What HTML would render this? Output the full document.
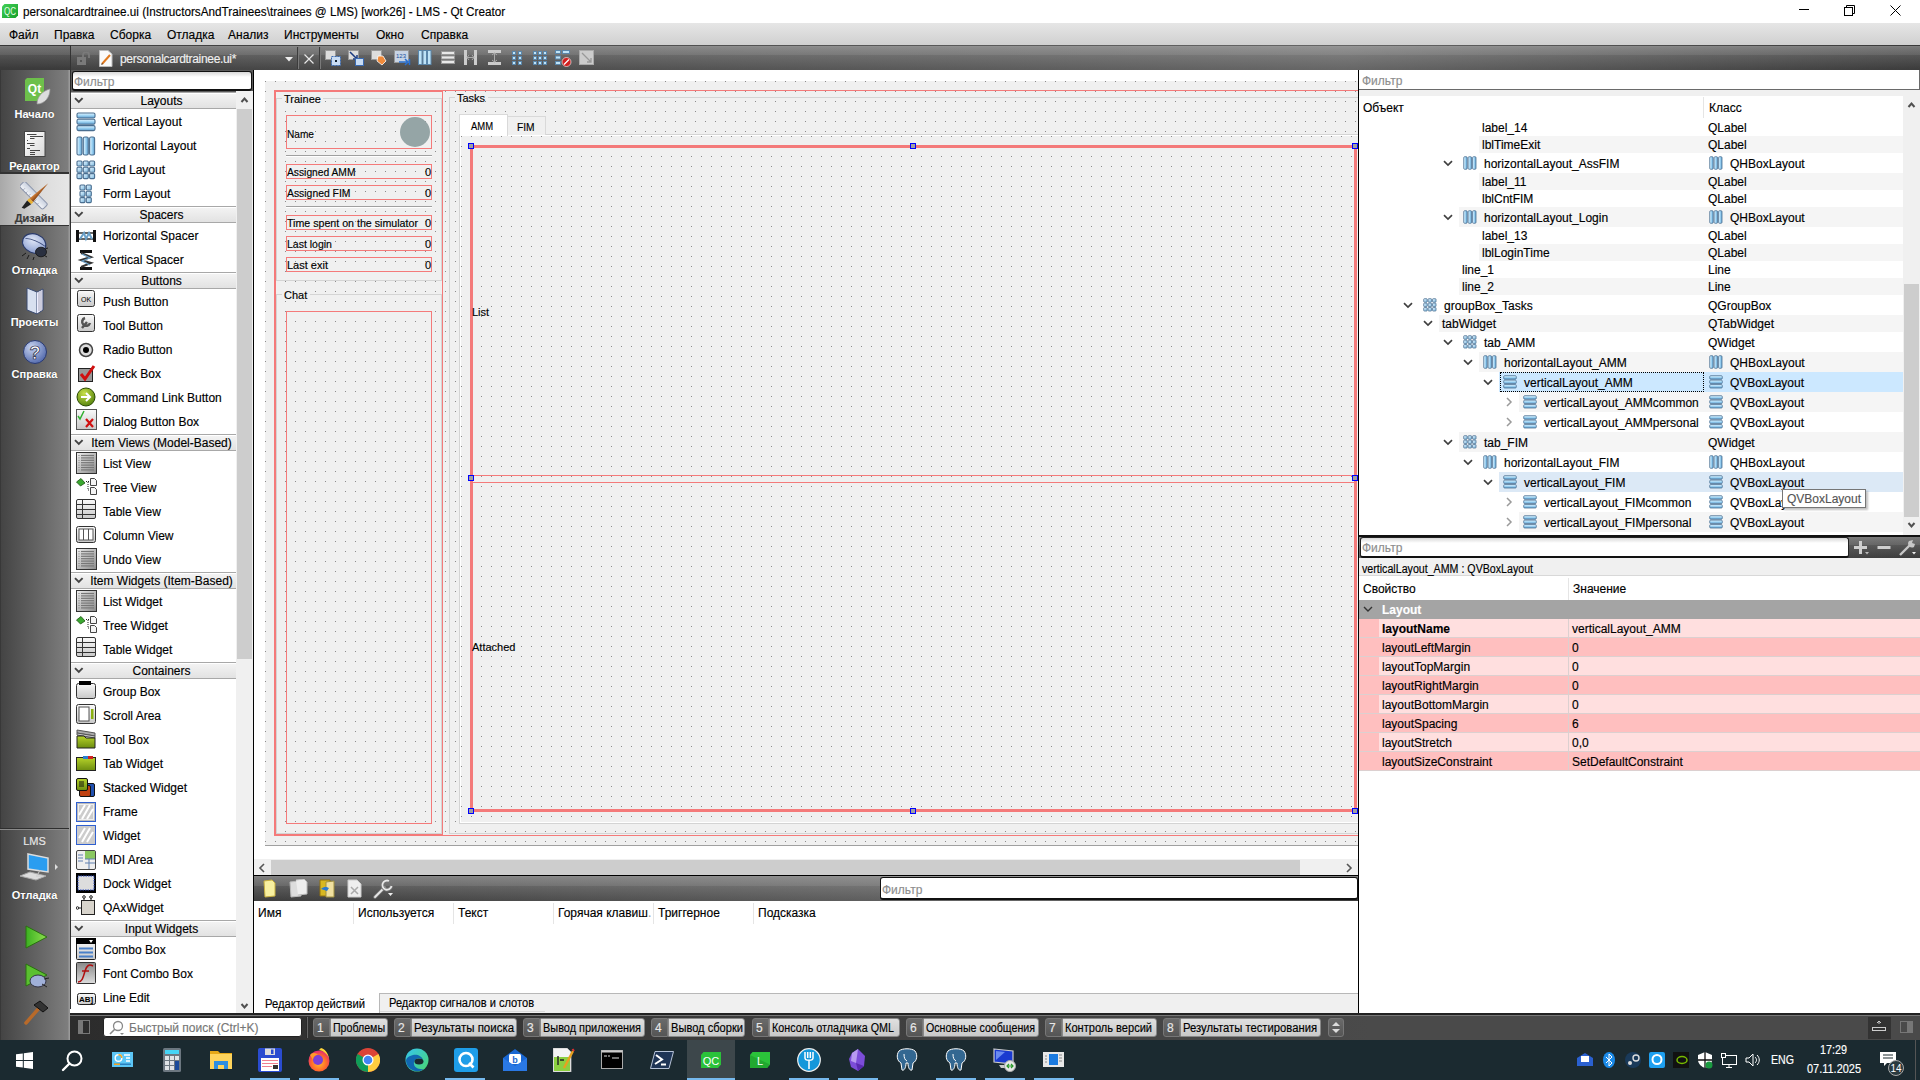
<!DOCTYPE html><html><head><meta charset="utf-8"><style>
*{margin:0;padding:0;box-sizing:border-box}
html,body{width:1920px;height:1080px;overflow:hidden;background:#fff;font-family:"Liberation Sans",sans-serif;font-size:12px;color:#000}
.a{position:absolute}
.t{position:absolute;white-space:pre;line-height:14px;-webkit-text-stroke:0.15px currentColor}
.hd{position:absolute;left:71px;width:165px;height:17px;background:linear-gradient(#f4f4f4,#e2e2e2);border-top:1px solid #a8a8a8;border-bottom:1px solid #a8a8a8;box-shadow:inset 0 1px 0 #fff}
</style></head><body>
<div class="a" style="left:0px;top:0px;width:1920px;height:23px;background:#fff"></div>
<svg class="a" style="left:2px;top:4px;" width="16" height="14" viewBox="0 0 16 14"><defs><linearGradient id="qcg" x1="0" y1="0" x2="1" y2="1"><stop offset="0" stop-color="#44d058"/><stop offset="1" stop-color="#14a02a"/></linearGradient></defs><path d="M2.5 0 H16 V11.5 L13.5 14 H0 V2.5Z" fill="url(#qcg)"/><text x="8" y="11" font-size="10" font-family="Liberation Sans" text-anchor="middle" fill="#e8ffe8" textLength="12" lengthAdjust="spacingAndGlyphs">QC</text></svg>
<div class="t" style="left:23px;top:5px;font-size:12px;transform:scaleX(0.9760);transform-origin:0 0;">personalcardtrainee.ui (InstructorsAndTrainees\trainees @ LMS) [work26] - LMS - Qt Creator</div>
<svg class="a" style="left:1799px;top:9px;" width="10" height="2" viewBox="0 0 10 2"><rect width="10" height="1" fill="#000"/></svg>
<svg class="a" style="left:1844px;top:5px;" width="11" height="11" viewBox="0 0 11 11"><rect x="0.5" y="2.5" width="8" height="8" fill="none" stroke="#000"/><path d="M2.5 2.5 V0.5 H10.5 V8.5 H8.5" fill="none" stroke="#000"/></svg>
<svg class="a" style="left:1890px;top:5px;" width="11" height="11" viewBox="0 0 11 11"><path d="M0.5 0.5 L10.5 10.5 M10.5 0.5 L0.5 10.5" stroke="#000"/></svg>
<div class="a" style="left:0px;top:23px;width:1920px;height:22px;background:linear-gradient(#e6e6e6,#d0d0d0)"></div>
<div class="t" style="left:9px;top:28px;">Файл</div>
<div class="t" style="left:54px;top:28px;">Правка</div>
<div class="t" style="left:110px;top:28px;">Сборка</div>
<div class="t" style="left:167px;top:28px;">Отладка</div>
<div class="t" style="left:228px;top:28px;">Анализ</div>
<div class="t" style="left:284px;top:28px;">Инструменты</div>
<div class="t" style="left:376px;top:28px;">Окно</div>
<div class="t" style="left:421px;top:28px;">Справка</div>
<div class="a" style="left:0px;top:45px;width:1920px;height:25px;background:linear-gradient(90deg,rgba(0,0,0,.118) 0%,rgba(153,153,153,.39) 70%,rgba(0,0,0,.157) 100%),linear-gradient(#444 0px,#444 1px,#9a9a9a 1px,#8e8e8e 2px,#767676 10px,#666 10px,#474747 24px,#474747 25px)"></div>
<div class="a" style="left:0px;top:45px;width:70px;height:25px;background:rgba(0,0,0,.08)"></div>
<div class="a" style="left:70px;top:45px;width:1px;height:25px;background:#333"></div>
<svg class="a" style="left:77px;top:52px;" width="14" height="13" viewBox="0 0 14 13"><rect x="0" y="5" width="9" height="8" fill="#7a7a7a"/><path d="M6 5 V3 A3 3 0 0 1 12 3 V6" stroke="#7a7a7a" stroke-width="1.8" fill="none"/><rect x="3" y="8" width="2" height="2" fill="#555"/></svg>
<svg class="a" style="left:99px;top:50px;" width="15" height="17" viewBox="0 0 15 17"><path d="M0.5 0.5 H9 L13 4 V16.5 H0.5Z" fill="#fafafa" stroke="#bbb"/><path d="M3 14 L11 5" stroke="#e07a20" stroke-width="2"/><path d="M2 15 L3 13 L4 14Z" fill="#333"/></svg>
<div class="t" style="left:120px;top:52px;color:#f0f0f0;letter-spacing:-0.32px">personalcardtrainee.ui*</div>
<svg class="a" style="left:285px;top:57px;" width="8" height="5" viewBox="0 0 8 5"><path d="M0 0 H8 L4 4.5Z" fill="#eee"/></svg>
<div class="a" style="left:297px;top:47px;width:1px;height:22px;background:#3c3c3c"></div>
<div class="a" style="left:298px;top:47px;width:1px;height:22px;background:#7a7a7a"></div>
<svg class="a" style="left:304px;top:54px;" width="10" height="10" viewBox="0 0 10 10"><path d="M0.5 0.5 L9.5 9.5 M9.5 0.5 L0.5 9.5" stroke="#e8e8e8" stroke-width="1.2"/></svg>
<div class="a" style="left:319px;top:47px;width:1px;height:22px;background:#3c3c3c"></div>
<div class="a" style="left:320px;top:47px;width:1px;height:22px;background:#7a7a7a"></div>
<svg class="a" style="left:325px;top:50px;" width="17" height="17" viewBox="0 0 17 17"><rect x="0.5" y="0.5" width="10" height="9" fill="#ddd" stroke="#999"/><rect x="6.5" y="6.5" width="9" height="9" fill="#c8dcf4" stroke="#3a6ab0" stroke-dasharray="2 1"/><rect x="10" y="10" width="2" height="2" fill="#123"/></svg>
<svg class="a" style="left:348px;top:50px;" width="17" height="17" viewBox="0 0 17 17"><rect x="0.5" y="0.5" width="10" height="9" fill="#ddd" stroke="#999"/><path d="M2 2 L9 9 M9 5 V9 H5" stroke="#1a3a80" stroke-width="1.5" fill="none"/><rect x="7.5" y="8.5" width="8" height="7" fill="#c8dcf4" stroke="#3a6ab0"/></svg>
<svg class="a" style="left:371px;top:50px;" width="17" height="17" viewBox="0 0 17 17"><rect x="0.5" y="0.5" width="10" height="9" fill="#ddd" stroke="#999"/><path d="M7 6 L12 6 L15 11 L11 15 L6 11Z" fill="#f08a3a" stroke="#fff" stroke-width=".8"/></svg>
<svg class="a" style="left:394px;top:50px;" width="17" height="17" viewBox="0 0 17 17"><rect x="0.5" y="0.5" width="14" height="12" fill="#c8d4e4" stroke="#999"/><text x="2" y="8" font-size="6" font-family="Liberation Sans" fill="#2050a0">123</text><path d="M5 12 H14 M11 9 L14 12 L11 15 M15.5 9 V15" stroke="#2a70d0" stroke-width="1.5" fill="none"/></svg>
<svg class="a" style="left:418px;top:50px;" width="17" height="17" viewBox="0 0 17 17"><rect x="0.5" y="0.5" width="3.5" height="14" fill="#bfe3f7" stroke="#5a86aa"/><rect x="5" y="0.5" width="3.5" height="14" fill="#bfe3f7" stroke="#5a86aa"/><rect x="9.5" y="0.5" width="3.5" height="14" fill="#bfe3f7" stroke="#5a86aa"/></svg>
<svg class="a" style="left:441px;top:50px;" width="17" height="17" viewBox="0 0 17 17"><rect x="0.5" y="1.5" width="13" height="3" fill="#e8e8e8" stroke="#999"/><rect x="0.5" y="6" width="13" height="3" fill="#e8e8e8" stroke="#999"/><rect x="0.5" y="10.5" width="13" height="3" fill="#e8e8e8" stroke="#999"/></svg>
<svg class="a" style="left:464px;top:50px;" width="17" height="17" viewBox="0 0 17 17"><rect x="0" y="0" width="3" height="15" fill="#ccc"/><rect x="10" y="0" width="3" height="15" fill="#ccc"/><path d="M3 7.5 H10 M5 5 L3 7.5 L5 10 M8 5 L10 7.5 L8 10" stroke="#aaa" fill="none"/></svg>
<svg class="a" style="left:488px;top:50px;" width="17" height="17" viewBox="0 0 17 17"><rect x="0" y="0" width="13" height="3" fill="#ccc"/><rect x="0" y="12" width="13" height="3" fill="#ccc"/><path d="M6.5 3 V12 M4 5 L6.5 3 L9 5 M4 10 L6.5 12 L9 10" stroke="#aaa" fill="none"/></svg>
<svg class="a" style="left:512px;top:50px;" width="17" height="17" viewBox="0 0 17 17"><rect x="0.5" y="1.5" width="3" height="3" fill="#bfe3f7" stroke="#5a86aa"/><rect x="6.5" y="1.5" width="3" height="3" fill="#bfe3f7" stroke="#5a86aa"/><rect x="0.5" y="6.5" width="3" height="3" fill="#bfe3f7" stroke="#5a86aa"/><rect x="6.5" y="6.5" width="3" height="3" fill="#bfe3f7" stroke="#5a86aa"/><rect x="0.5" y="11.5" width="3" height="3" fill="#bfe3f7" stroke="#5a86aa"/><rect x="6.5" y="11.5" width="3" height="3" fill="#bfe3f7" stroke="#5a86aa"/></svg>
<svg class="a" style="left:533px;top:50px;" width="17" height="17" viewBox="0 0 17 17"><rect x="0.5" y="1.5" width="3" height="3" fill="#bfe3f7" stroke="#5a86aa"/><rect x="0.5" y="6.5" width="3" height="3" fill="#bfe3f7" stroke="#5a86aa"/><rect x="0.5" y="11.5" width="3" height="3" fill="#bfe3f7" stroke="#5a86aa"/><rect x="5.5" y="1.5" width="3" height="3" fill="#bfe3f7" stroke="#5a86aa"/><rect x="5.5" y="6.5" width="3" height="3" fill="#bfe3f7" stroke="#5a86aa"/><rect x="5.5" y="11.5" width="3" height="3" fill="#bfe3f7" stroke="#5a86aa"/><rect x="10.5" y="1.5" width="3" height="3" fill="#bfe3f7" stroke="#5a86aa"/><rect x="10.5" y="6.5" width="3" height="3" fill="#bfe3f7" stroke="#5a86aa"/><rect x="10.5" y="11.5" width="3" height="3" fill="#bfe3f7" stroke="#5a86aa"/></svg>
<svg class="a" style="left:555px;top:50px;" width="17" height="17" viewBox="0 0 17 17"><rect x="0.5" y="0.5" width="5" height="3" fill="#bfe3f7" stroke="#5a86aa"/><rect x="7.5" y="0.5" width="7" height="3" fill="#bfe3f7" stroke="#5a86aa"/><rect x="0.5" y="6" width="5" height="3" fill="#bfe3f7" stroke="#5a86aa"/><rect x="0.5" y="11.5" width="5" height="3" fill="#bfe3f7" stroke="#5a86aa"/><circle cx="11.5" cy="12" r="4.5" fill="#d02020" stroke="#fff" stroke-width=".6"/><path d="M9 14.5 L14 9.5" stroke="#fff" stroke-width="1.2"/></svg>
<svg class="a" style="left:579px;top:50px;" width="17" height="17" viewBox="0 0 17 17"><rect x="0.5" y="0.5" width="14" height="14" fill="#ccc" stroke="#aaa"/><path d="M3 3 L12 12 M12 8 V12 H8" stroke="#999" stroke-width="1.3" fill="none"/></svg>
<div class="a" style="left:0px;top:70px;width:70px;height:970px;background:linear-gradient(90deg,#2c2c2c 0px,#444 1px,#7e7e7e 68px,#9a9a9a 69px)"></div>
<div class="a" style="left:70px;top:70px;width:1px;height:943px;background:#2e2e2e"></div>
<svg class="a" style="left:24px;top:77px;" width="28" height="30" viewBox="0 0 28 30"><path d="M3 1 H20 V20 L16 24 H1 V3Z" fill="#6dc04b"/><text x="10.5" y="16" font-size="12" font-weight="bold" font-family="Liberation Sans" text-anchor="middle" fill="#fff">Qt</text><path d="M13 27 C13 20 18 14 26 12 C26 20 21 27 13 27Z" fill="#ddd" stroke="#999" stroke-width=".7"/></svg>
<div class="t" style="left:0;width:69px;text-align:center;top:107px;font-size:11px;font-weight:bold;color:#fff;text-shadow:0 0 1px #000">Начало</div>
<svg class="a" style="left:24px;top:131px;" width="22" height="26" viewBox="0 0 22 26"><defs><linearGradient id="dg" x1="0" y1="0" x2="1" y2="1"><stop offset="0" stop-color="#fff"/><stop offset="1" stop-color="#d8d8d8"/></linearGradient></defs><rect x="0.5" y="0.5" width="20.5" height="25" fill="url(#dg)" stroke="#444"/><path d="M3 3.5 H12.5 M6 5.5 H19 M6 7.5 H10.5 M3 9.5 H4 M3 12.5 H10.5 M6 14.5 H10.5 M3 17.5 H6 M6 19.5 H16 M6 21.5 H11 M6 23.5 H11" stroke="#333" stroke-width="0.9"/></svg>
<div class="t" style="left:0;width:69px;text-align:center;top:159px;font-size:11px;font-weight:bold;color:#fff;text-shadow:0 0 1px #000">Редактор</div>
<div class="a" style="left:0px;top:172px;width:69px;height:2px;background:#333"></div>
<div class="a" style="left:0px;top:174px;width:69px;height:51px;background:linear-gradient(90deg,#a8a8a8,#dcdcdc 60%,#e6e6e6)"></div>
<div class="a" style="left:0px;top:225px;width:69px;height:1px;background:#333"></div>
<svg class="a" style="left:20px;top:182px;" width="30" height="28" viewBox="0 0 30 28"><defs><linearGradient id="rul" x1="0" y1="0" x2="1" y2="0"><stop offset="0" stop-color="#f4f6fa"/><stop offset="1" stop-color="#c8d0de"/></linearGradient><linearGradient id="brs" x1="0" y1="0" x2="1" y2="0"><stop offset="0" stop-color="#e08a40"/><stop offset="1" stop-color="#7a3a10"/></linearGradient></defs><g transform="translate(13.5,13.3) rotate(-45)"><rect x="-3.8" y="-16.5" width="7.6" height="33" rx="1.8" fill="url(#rul)" stroke="#8a94aa" stroke-width="1"/><path d="M-3.8 -11 H-1 M-3.8 -7 H-1.8 M-3.8 -3 H-1 M-3.8 1 H-1.8 M-3.8 5 H-1 M-3.8 9 H-1.8" stroke="#9aa2b4" stroke-width=".8"/></g><g transform="translate(15.5,14) rotate(45)"><path d="M0 -18 L2.6 6 L-2.6 6Z" fill="url(#brs)"/><rect x="-2.8" y="6" width="5.6" height="3" fill="#e8b030"/><path d="M-2.8 9 H2.8 L1.2 17 L-1.5 18Z" fill="#222"/></g></svg>
<div class="t" style="left:0;width:69px;text-align:center;top:211px;font-size:11px;font-weight:bold;color:#3a3a3a">Дизайн</div>
<svg class="a" style="left:20px;top:232px;" width="30" height="28" viewBox="0 0 30 28"><defs><radialGradient id="bg1" cx=".4" cy=".35" r=".7"><stop offset="0" stop-color="#dfe6f6"/><stop offset="1" stop-color="#8a9ed0"/></radialGradient></defs><path d="M6 21 L2 24 M9 23 L7 27 M14 25 L13 28 M22 22 L27 25 M24 17 L28 16" stroke="#1a1a1a" stroke-width="1"/><g transform="rotate(22 14 12)"><ellipse cx="14" cy="11.5" rx="12" ry="9.5" fill="url(#bg1)" stroke="#2a3a6a" stroke-width="1.1"/><path d="M4 10 Q14 7 25 10" stroke="#3a4a7a" fill="none" stroke-width=".9"/></g><ellipse cx="21" cy="20" rx="5.5" ry="4.8" fill="#2a3040" stroke="#111" stroke-width=".8"/></svg>
<div class="t" style="left:0;width:69px;text-align:center;top:263px;font-size:11px;font-weight:bold;color:#fff;text-shadow:0 0 1px #000">Отладка</div>
<svg class="a" style="left:26px;top:286px;" width="18" height="29" viewBox="0 0 18 29"><path d="M1 2 L11 6 V28 L1 24Z" fill="#d8e0f0" stroke="#3a4a70"/><path d="M11 6 L17 3 V24 L11 28" fill="#eef" stroke="#3a4a70"/><path d="M13 6 V25 M15 5 V25" stroke="#aab"/></svg>
<div class="t" style="left:0;width:69px;text-align:center;top:315px;font-size:11px;font-weight:bold;color:#fff;text-shadow:0 0 1px #000">Проекты</div>
<svg class="a" style="left:22px;top:339px;" width="26" height="26" viewBox="0 0 26 26"><defs><radialGradient id="hg" cx=".35" cy=".3" r=".8"><stop offset="0" stop-color="#c8d4f0"/><stop offset="1" stop-color="#4a62a8"/></radialGradient></defs><circle cx="13" cy="13" r="11.5" fill="url(#hg)" stroke="#2a3a70" stroke-width="1"/><text x="13" y="20" font-size="18" font-weight="bold" font-family="Liberation Sans" text-anchor="middle" fill="#fff" stroke="#1a2440" stroke-width=".7">?</text></svg>
<div class="t" style="left:0;width:69px;text-align:center;top:367px;font-size:11px;font-weight:bold;color:#fff;text-shadow:0 0 1px #000">Справка</div>
<div class="a" style="left:0px;top:828px;width:69px;height:1px;background:#2e2e2e"></div>
<div class="a" style="left:0px;top:829px;width:69px;height:1px;background:#8a8a8a"></div>
<div class="t" style="left:0;width:69px;text-align:center;top:834px;font-size:11px;color:#e8e8e8">LMS</div>
<svg class="a" style="left:18px;top:852px;" width="40" height="30" viewBox="0 0 40 30"><path d="M10 2 L30 6 V20 L10 17Z" fill="#2a9df0" stroke="#ddd" stroke-width="1.5"/><path d="M2 24 L12 20 L28 24 L18 28Z" fill="#ddd" stroke="#aaa"/><path d="M20 22 L22 18 M18 24 L26 24" stroke="#ccc"/><path d="M37 12 L40 15 L37 18Z" fill="#ddd"/></svg>
<div class="t" style="left:0;width:69px;text-align:center;top:888px;font-size:11px;font-weight:bold;color:#fff;text-shadow:0 0 1px #000">Отладка</div>
<svg class="a" style="left:24px;top:924px;" width="25" height="26" viewBox="0 0 25 26"><defs><linearGradient id="rg" x1="0" y1="0" x2="1" y2="0"><stop offset="0" stop-color="#3ab020"/><stop offset="1" stop-color="#90e050"/></linearGradient></defs><path d="M2 2 L23 13 L2 24Z" fill="url(#rg)" stroke="#2a7010"/></svg>
<svg class="a" style="left:24px;top:962px;" width="26" height="28" viewBox="0 0 26 28"><path d="M2 2 L23 13 L2 24Z" fill="#5ac030" stroke="#2a7010"/><ellipse cx="14" cy="19" rx="8" ry="6" fill="#a0b0d8" stroke="#334"/><path d="M18 22 L23 25 M20 17 L25 16" stroke="#222"/></svg>
<svg class="a" style="left:22px;top:998px;" width="30" height="28" viewBox="0 0 30 28"><path d="M4 25 L18 9" stroke="#b86a2a" stroke-width="3.5" stroke-linecap="round"/><path d="M12 7 L18 3 L26 10 L21 14Z" fill="#333" stroke="#111"/></svg>
<div class="a" style="left:71px;top:70px;width:182px;height:943px;background:#fff"></div>
<div class="a" style="left:71px;top:70px;width:182px;height:22px;background:#5a5a5a"></div>
<div class="a" style="left:72px;top:71px;width:180px;height:20px;background:linear-gradient(#d8d8d8,#fff 5px);border:1px solid #111;border-bottom:2px solid #111;border-radius:3px"></div>
<div class="t" style="left:74px;top:75px;color:#8e8e8e">Фильтр</div>
<div class="a" style="left:236px;top:91px;width:17px;height:922px;background:#f0f0f0"></div>
<div class="a" style="left:237px;top:109px;width:15px;height:550px;background:#cdcdcd"></div>
<svg class="a" style="left:240px;top:96px;" width="9" height="8" viewBox="0 0 9 8"><path d="M1.5 6 L4.5 2.5 L7.5 6" stroke="#505050" stroke-width="2" fill="none" stroke-linecap="butt"/></svg>
<svg class="a" style="left:240px;top:1002px;" width="9" height="8" viewBox="0 0 9 8"><path d="M1.5 2 L4.5 5.5 L7.5 2" stroke="#505050" stroke-width="2" fill="none" stroke-linecap="butt"/></svg>
<div class="hd" style="top:92px"></div>
<svg class="a" style="left:74px;top:97px;" width="10" height="7" viewBox="0 0 10 7"><path d="M1 1.2 L4.8 5 L8.6 1.2" stroke="#444" stroke-width="1.9" fill="none"/></svg>
<div class="t" style="left:70px;width:183px;text-align:center;top:94px;">Layouts</div>
<svg class="a" style="left:76px;top:112px;" width="21" height="22" viewBox="0 0 21 22"><defs><linearGradient id="lv" x1="0" y1="0" x2="0" y2="1"><stop offset="0" stop-color="#e8f6ff"/><stop offset=".5" stop-color="#9ed4f4"/><stop offset="1" stop-color="#5e9ccc"/></linearGradient></defs><rect x="1" y="1.0" width="18" height="5" rx="1.5" fill="url(#lv)" stroke="#4a6e90" stroke-width="1.1"/><rect x="1" y="7.3" width="18" height="5" rx="1.5" fill="url(#lv)" stroke="#4a6e90" stroke-width="1.1"/><rect x="1" y="13.6" width="18" height="5" rx="1.5" fill="url(#lv)" stroke="#4a6e90" stroke-width="1.1"/></svg>
<div class="t" style="left:103px;top:115px;">Vertical Layout</div>
<svg class="a" style="left:76px;top:136px;" width="21" height="22" viewBox="0 0 21 22"><defs><linearGradient id="lh" x1="0" y1="0" x2="1" y2="0"><stop offset="0" stop-color="#e8f6ff"/><stop offset=".5" stop-color="#9ed4f4"/><stop offset="1" stop-color="#5e9ccc"/></linearGradient></defs><rect x="1.0" y="1" width="5" height="18" rx="1.5" fill="url(#lh)" stroke="#4a6e90" stroke-width="1.1"/><rect x="7.3" y="1" width="5" height="18" rx="1.5" fill="url(#lh)" stroke="#4a6e90" stroke-width="1.1"/><rect x="13.6" y="1" width="5" height="18" rx="1.5" fill="url(#lh)" stroke="#4a6e90" stroke-width="1.1"/></svg>
<div class="t" style="left:103px;top:139px;">Horizontal Layout</div>
<svg class="a" style="left:76px;top:160px;" width="21" height="22" viewBox="0 0 21 22"><defs><linearGradient id="lg" x1="0" y1="0" x2="1" y2="1"><stop offset="0" stop-color="#e8f6ff"/><stop offset="1" stop-color="#7ab8e0"/></linearGradient></defs><rect x="1.0" y="1.0" width="5" height="5" rx="1" fill="url(#lg)" stroke="#4a6e90" stroke-width="1.1"/><rect x="1.0" y="7.3" width="5" height="5" rx="1" fill="url(#lg)" stroke="#4a6e90" stroke-width="1.1"/><rect x="1.0" y="13.6" width="5" height="5" rx="1" fill="url(#lg)" stroke="#4a6e90" stroke-width="1.1"/><rect x="7.3" y="1.0" width="5" height="5" rx="1" fill="url(#lg)" stroke="#4a6e90" stroke-width="1.1"/><rect x="7.3" y="7.3" width="5" height="5" rx="1" fill="url(#lg)" stroke="#4a6e90" stroke-width="1.1"/><rect x="7.3" y="13.6" width="5" height="5" rx="1" fill="url(#lg)" stroke="#4a6e90" stroke-width="1.1"/><rect x="13.6" y="1.0" width="5" height="5" rx="1" fill="url(#lg)" stroke="#4a6e90" stroke-width="1.1"/><rect x="13.6" y="7.3" width="5" height="5" rx="1" fill="url(#lg)" stroke="#4a6e90" stroke-width="1.1"/><rect x="13.6" y="13.6" width="5" height="5" rx="1" fill="url(#lg)" stroke="#4a6e90" stroke-width="1.1"/></svg>
<div class="t" style="left:103px;top:163px;">Grid Layout</div>
<svg class="a" style="left:76px;top:184px;" width="21" height="22" viewBox="0 0 21 22"><defs><linearGradient id="lf" x1="0" y1="0" x2="1" y2="1"><stop offset="0" stop-color="#e8f6ff"/><stop offset="1" stop-color="#7ab8e0"/></linearGradient></defs><rect x="4.0" y="1.0" width="5" height="5" rx="1" fill="url(#lf)" stroke="#4a6e90" stroke-width="1.1"/><rect x="4.0" y="7.3" width="5" height="5" rx="1" fill="url(#lf)" stroke="#4a6e90" stroke-width="1.1"/><rect x="4.0" y="13.6" width="5" height="5" rx="1" fill="url(#lf)" stroke="#4a6e90" stroke-width="1.1"/><rect x="10.3" y="1.0" width="5" height="5" rx="1" fill="url(#lf)" stroke="#4a6e90" stroke-width="1.1"/><rect x="10.3" y="7.3" width="5" height="5" rx="1" fill="url(#lf)" stroke="#4a6e90" stroke-width="1.1"/><rect x="10.3" y="13.6" width="5" height="5" rx="1" fill="url(#lf)" stroke="#4a6e90" stroke-width="1.1"/></svg>
<div class="t" style="left:103px;top:187px;">Form Layout</div>
<div class="hd" style="top:206px"></div>
<svg class="a" style="left:74px;top:211px;" width="10" height="7" viewBox="0 0 10 7"><path d="M1 1.2 L4.8 5 L8.6 1.2" stroke="#444" stroke-width="1.9" fill="none"/></svg>
<div class="t" style="left:70px;width:183px;text-align:center;top:208px;">Spacers</div>
<svg class="a" style="left:76px;top:226px;" width="21" height="22" viewBox="0 0 21 22"><rect x="0" y="4" width="3" height="12" fill="#111"/><rect x="17" y="4" width="3" height="12" fill="#111"/><path d="M3 7 L17 7 M3 13 L17 13" stroke="#333" stroke-width="1.5"/><path d="M4 13 L8 7 L10 13 L13 7 L16 13" stroke="#6aa0c8" stroke-width="2" fill="none"/></svg>
<div class="t" style="left:103px;top:229px;">Horizontal Spacer</div>
<svg class="a" style="left:76px;top:250px;" width="21" height="22" viewBox="0 0 21 22"><rect x="4" y="0" width="12" height="3" fill="#111"/><rect x="4" y="17" width="12" height="3" fill="#111"/><path d="M5 3 L15 7 L5 10 L15 13 L5 17" stroke="#333" stroke-width="2" fill="none"/><path d="M6 4 L14 8 L6 11 L14 15" stroke="#6aa0c8" stroke-width="1.2" fill="none"/></svg>
<div class="t" style="left:103px;top:253px;">Vertical Spacer</div>
<div class="hd" style="top:272px"></div>
<svg class="a" style="left:74px;top:277px;" width="10" height="7" viewBox="0 0 10 7"><path d="M1 1.2 L4.8 5 L8.6 1.2" stroke="#444" stroke-width="1.9" fill="none"/></svg>
<div class="t" style="left:70px;width:183px;text-align:center;top:274px;">Buttons</div>
<svg class="a" style="left:76px;top:289px;" width="21" height="22" viewBox="0 0 21 22"><defs><linearGradient id="gb" x1="0" y1="0" x2="0" y2="1"><stop offset="0" stop-color="#fafafa"/><stop offset="1" stop-color="#c8c8c8"/></linearGradient><linearGradient id="gg" x1="0" y1="0" x2="0" y2="1"><stop offset="0" stop-color="#b6d32a"/><stop offset="1" stop-color="#6c8c10"/></linearGradient></defs><rect x="1.5" y="1.5" width="17" height="16" rx="2" fill="url(#gb)" stroke="#333"/><text x="10" y="12.5" font-size="7" font-family="Liberation Sans" text-anchor="middle" fill="#000">OK</text></svg>
<div class="t" style="left:103px;top:295px;">Push Button</div>
<svg class="a" style="left:76px;top:313px;" width="21" height="22" viewBox="0 0 21 22"><defs><linearGradient id="gb" x1="0" y1="0" x2="0" y2="1"><stop offset="0" stop-color="#fafafa"/><stop offset="1" stop-color="#c8c8c8"/></linearGradient><linearGradient id="gg" x1="0" y1="0" x2="0" y2="1"><stop offset="0" stop-color="#b6d32a"/><stop offset="1" stop-color="#6c8c10"/></linearGradient></defs><rect x="1.5" y="1.5" width="17" height="17" rx="2" fill="url(#gb)" stroke="#333"/><path d="M6 15 L11 9 M9 5 A4 4 0 1 0 14 10" stroke="#555" stroke-width="2.5" fill="none"/></svg>
<div class="t" style="left:103px;top:319px;">Tool Button</div>
<svg class="a" style="left:76px;top:340px;" width="21" height="22" viewBox="0 0 21 22"><circle cx="10" cy="10" r="6.5" fill="#ddd" stroke="#444" stroke-width="1.5"/><circle cx="10" cy="10" r="3" fill="#000"/></svg>
<div class="t" style="left:103px;top:343px;">Radio Button</div>
<svg class="a" style="left:76px;top:364px;" width="21" height="22" viewBox="0 0 21 22"><defs><linearGradient id="gb" x1="0" y1="0" x2="0" y2="1"><stop offset="0" stop-color="#fafafa"/><stop offset="1" stop-color="#c8c8c8"/></linearGradient><linearGradient id="gg" x1="0" y1="0" x2="0" y2="1"><stop offset="0" stop-color="#b6d32a"/><stop offset="1" stop-color="#6c8c10"/></linearGradient></defs><rect x="2.5" y="4.5" width="14" height="13" fill="#999" stroke="#222"/><path d="M5 10 L9 15 L18 2" stroke="#d01010" stroke-width="3" fill="none"/></svg>
<div class="t" style="left:103px;top:367px;">Check Box</div>
<svg class="a" style="left:76px;top:387px;" width="21" height="22" viewBox="0 0 21 22"><defs><radialGradient id="cg" cx=".4" cy=".3" r=".8"><stop offset="0" stop-color="#c8e048"/><stop offset="1" stop-color="#4a7a08"/></radialGradient></defs><circle cx="10" cy="10" r="9" fill="url(#cg)" stroke="#2a4a00"/><path d="M5 10 L14 10 M10 6 L14 10 L10 14" stroke="#fff" stroke-width="2" fill="none"/></svg>
<div class="t" style="left:103px;top:391px;">Command Link Button</div>
<svg class="a" style="left:76px;top:409px;" width="21" height="22" viewBox="0 0 21 22"><defs><linearGradient id="gb" x1="0" y1="0" x2="0" y2="1"><stop offset="0" stop-color="#fafafa"/><stop offset="1" stop-color="#c8c8c8"/></linearGradient><linearGradient id="gg" x1="0" y1="0" x2="0" y2="1"><stop offset="0" stop-color="#b6d32a"/><stop offset="1" stop-color="#6c8c10"/></linearGradient></defs><rect x="0.5" y="0.5" width="20" height="20" fill="url(#gb)" stroke="#555"/><path d="M2 7 L4 10 L8 2" stroke="#30b030" stroke-width="1.5" fill="none"/><path d="M10 10 L17 18 M17 10 L10 18" stroke="#d01010" stroke-width="2.2"/></svg>
<div class="t" style="left:103px;top:415px;">Dialog Button Box</div>
<div class="hd" style="top:434px"></div>
<svg class="a" style="left:74px;top:439px;" width="10" height="7" viewBox="0 0 10 7"><path d="M1 1.2 L4.8 5 L8.6 1.2" stroke="#444" stroke-width="1.9" fill="none"/></svg>
<div class="t" style="left:70px;width:183px;text-align:center;top:436px;">Item Views (Model-Based)</div>
<svg class="a" style="left:76px;top:452px;" width="21" height="22" viewBox="0 0 21 22"><defs><linearGradient id="lvg" x1="0" y1="0" x2="1" y2="1"><stop offset="0" stop-color="#f0f0f0"/><stop offset="1" stop-color="#8a8a8a"/></linearGradient></defs><rect x="0.5" y="0.5" width="20" height="21" fill="url(#lvg)" stroke="#333"/><path d="M5 3.5 H18" stroke="#777" stroke-width="1.2"/><rect x="2.5" y="3.0" width="1" height="1" fill="#777"/><path d="M5 5.9 H18" stroke="#777" stroke-width="1.2"/><rect x="2.5" y="5.4" width="1" height="1" fill="#777"/><path d="M5 8.3 H18" stroke="#777" stroke-width="1.2"/><rect x="2.5" y="7.8" width="1" height="1" fill="#777"/><path d="M5 10.7 H18" stroke="#777" stroke-width="1.2"/><rect x="2.5" y="10.2" width="1" height="1" fill="#777"/><path d="M5 13.1 H18" stroke="#777" stroke-width="1.2"/><rect x="2.5" y="12.6" width="1" height="1" fill="#777"/><path d="M5 15.5 H18" stroke="#777" stroke-width="1.2"/><rect x="2.5" y="15.0" width="1" height="1" fill="#777"/><path d="M5 17.9 H18" stroke="#777" stroke-width="1.2"/><rect x="2.5" y="17.4" width="1" height="1" fill="#777"/></svg>
<div class="t" style="left:103px;top:457px;">List View</div>
<svg class="a" style="left:76px;top:478px;" width="21" height="22" viewBox="0 0 21 22"><path d="M0.5 4 L5 0.5 L9 5 L4.5 8Z" fill="#3aa830" stroke="#1a5010" stroke-width=".8"/><path d="M10 3.5 H14 M12 4 V12 H14" stroke="#222" stroke-dasharray="1 1" fill="none"/><path d="M14.5 0.5 H18.5 L20.5 2.5 V7.5 H14.5Z" fill="#f4f4f4" stroke="#444"/><path d="M14.5 9.5 H18.5 L20.5 11.5 V16.5 H14.5Z" fill="#f4f4f4" stroke="#444"/></svg>
<div class="t" style="left:103px;top:481px;">Tree View</div>
<svg class="a" style="left:76px;top:499px;" width="21" height="22" viewBox="0 0 21 22"><defs><linearGradient id="gb" x1="0" y1="0" x2="0" y2="1"><stop offset="0" stop-color="#fafafa"/><stop offset="1" stop-color="#c8c8c8"/></linearGradient><linearGradient id="gg" x1="0" y1="0" x2="0" y2="1"><stop offset="0" stop-color="#b6d32a"/><stop offset="1" stop-color="#6c8c10"/></linearGradient></defs><rect x="0.5" y="0.5" width="19" height="19" rx="1.5" fill="url(#gb)" stroke="#333"/><path d="M1 5.5 H19 M1 10.5 H19 M1 15.5 H19 M6.5 1 V19" stroke="#333"/></svg>
<div class="t" style="left:103px;top:505px;">Table View</div>
<svg class="a" style="left:76px;top:525px;" width="21" height="22" viewBox="0 0 21 22"><defs><linearGradient id="gb" x1="0" y1="0" x2="0" y2="1"><stop offset="0" stop-color="#fafafa"/><stop offset="1" stop-color="#c8c8c8"/></linearGradient><linearGradient id="gg" x1="0" y1="0" x2="0" y2="1"><stop offset="0" stop-color="#b6d32a"/><stop offset="1" stop-color="#6c8c10"/></linearGradient></defs><rect x="0.5" y="1.5" width="19" height="16" rx="2" fill="url(#gb)" stroke="#333"/><rect x="3" y="4" width="14" height="11" fill="#fff" stroke="#555"/><path d="M7.5 4 V15 M12.5 4 V15" stroke="#555"/></svg>
<div class="t" style="left:103px;top:529px;">Column View</div>
<svg class="a" style="left:76px;top:548px;" width="21" height="22" viewBox="0 0 21 22"><defs><linearGradient id="lvg" x1="0" y1="0" x2="1" y2="1"><stop offset="0" stop-color="#f0f0f0"/><stop offset="1" stop-color="#8a8a8a"/></linearGradient></defs><rect x="0.5" y="0.5" width="20" height="21" fill="url(#lvg)" stroke="#333"/><path d="M5 3.5 H18" stroke="#777" stroke-width="1.2"/><rect x="2.5" y="3.0" width="1" height="1" fill="#777"/><path d="M5 5.9 H18" stroke="#777" stroke-width="1.2"/><rect x="2.5" y="5.4" width="1" height="1" fill="#777"/><path d="M5 8.3 H18" stroke="#777" stroke-width="1.2"/><rect x="2.5" y="7.8" width="1" height="1" fill="#777"/><path d="M5 10.7 H18" stroke="#777" stroke-width="1.2"/><rect x="2.5" y="10.2" width="1" height="1" fill="#777"/><path d="M5 13.1 H18" stroke="#777" stroke-width="1.2"/><rect x="2.5" y="12.6" width="1" height="1" fill="#777"/><path d="M5 15.5 H18" stroke="#777" stroke-width="1.2"/><rect x="2.5" y="15.0" width="1" height="1" fill="#777"/><path d="M5 17.9 H18" stroke="#777" stroke-width="1.2"/><rect x="2.5" y="17.4" width="1" height="1" fill="#777"/></svg>
<div class="t" style="left:103px;top:553px;">Undo View</div>
<div class="hd" style="top:572px"></div>
<svg class="a" style="left:74px;top:577px;" width="10" height="7" viewBox="0 0 10 7"><path d="M1 1.2 L4.8 5 L8.6 1.2" stroke="#444" stroke-width="1.9" fill="none"/></svg>
<div class="t" style="left:70px;width:183px;text-align:center;top:574px;">Item Widgets (Item-Based)</div>
<svg class="a" style="left:76px;top:590px;" width="21" height="22" viewBox="0 0 21 22"><defs><linearGradient id="lvg" x1="0" y1="0" x2="1" y2="1"><stop offset="0" stop-color="#f0f0f0"/><stop offset="1" stop-color="#8a8a8a"/></linearGradient></defs><rect x="0.5" y="0.5" width="20" height="21" fill="url(#lvg)" stroke="#333"/><path d="M5 3.5 H18" stroke="#777" stroke-width="1.2"/><rect x="2.5" y="3.0" width="1" height="1" fill="#777"/><path d="M5 5.9 H18" stroke="#777" stroke-width="1.2"/><rect x="2.5" y="5.4" width="1" height="1" fill="#777"/><path d="M5 8.3 H18" stroke="#777" stroke-width="1.2"/><rect x="2.5" y="7.8" width="1" height="1" fill="#777"/><path d="M5 10.7 H18" stroke="#777" stroke-width="1.2"/><rect x="2.5" y="10.2" width="1" height="1" fill="#777"/><path d="M5 13.1 H18" stroke="#777" stroke-width="1.2"/><rect x="2.5" y="12.6" width="1" height="1" fill="#777"/><path d="M5 15.5 H18" stroke="#777" stroke-width="1.2"/><rect x="2.5" y="15.0" width="1" height="1" fill="#777"/><path d="M5 17.9 H18" stroke="#777" stroke-width="1.2"/><rect x="2.5" y="17.4" width="1" height="1" fill="#777"/></svg>
<div class="t" style="left:103px;top:595px;">List Widget</div>
<svg class="a" style="left:76px;top:616px;" width="21" height="22" viewBox="0 0 21 22"><path d="M0.5 4 L5 0.5 L9 5 L4.5 8Z" fill="#3aa830" stroke="#1a5010" stroke-width=".8"/><path d="M10 3.5 H14 M12 4 V12 H14" stroke="#222" stroke-dasharray="1 1" fill="none"/><path d="M14.5 0.5 H18.5 L20.5 2.5 V7.5 H14.5Z" fill="#f4f4f4" stroke="#444"/><path d="M14.5 9.5 H18.5 L20.5 11.5 V16.5 H14.5Z" fill="#f4f4f4" stroke="#444"/></svg>
<div class="t" style="left:103px;top:619px;">Tree Widget</div>
<svg class="a" style="left:76px;top:637px;" width="21" height="22" viewBox="0 0 21 22"><defs><linearGradient id="gb" x1="0" y1="0" x2="0" y2="1"><stop offset="0" stop-color="#fafafa"/><stop offset="1" stop-color="#c8c8c8"/></linearGradient><linearGradient id="gg" x1="0" y1="0" x2="0" y2="1"><stop offset="0" stop-color="#b6d32a"/><stop offset="1" stop-color="#6c8c10"/></linearGradient></defs><rect x="0.5" y="0.5" width="19" height="19" rx="1.5" fill="url(#gb)" stroke="#333"/><path d="M1 5.5 H19 M1 10.5 H19 M1 15.5 H19 M6.5 1 V19" stroke="#333"/></svg>
<div class="t" style="left:103px;top:643px;">Table Widget</div>
<div class="hd" style="top:662px"></div>
<svg class="a" style="left:74px;top:667px;" width="10" height="7" viewBox="0 0 10 7"><path d="M1 1.2 L4.8 5 L8.6 1.2" stroke="#444" stroke-width="1.9" fill="none"/></svg>
<div class="t" style="left:70px;width:183px;text-align:center;top:664px;">Containers</div>
<svg class="a" style="left:76px;top:680px;" width="21" height="22" viewBox="0 0 21 22"><defs><linearGradient id="gb" x1="0" y1="0" x2="0" y2="1"><stop offset="0" stop-color="#fafafa"/><stop offset="1" stop-color="#c8c8c8"/></linearGradient><linearGradient id="gg" x1="0" y1="0" x2="0" y2="1"><stop offset="0" stop-color="#b6d32a"/><stop offset="1" stop-color="#6c8c10"/></linearGradient></defs><rect x="0.5" y="3.5" width="19" height="15" rx="2" fill="url(#gb)" stroke="#333"/><rect x="3" y="1" width="12" height="4" fill="#000"/></svg>
<div class="t" style="left:103px;top:685px;">Group Box</div>
<svg class="a" style="left:76px;top:704px;" width="21" height="22" viewBox="0 0 21 22"><defs><linearGradient id="gb" x1="0" y1="0" x2="0" y2="1"><stop offset="0" stop-color="#fafafa"/><stop offset="1" stop-color="#c8c8c8"/></linearGradient><linearGradient id="gg" x1="0" y1="0" x2="0" y2="1"><stop offset="0" stop-color="#b6d32a"/><stop offset="1" stop-color="#6c8c10"/></linearGradient></defs><rect x="0.5" y="0.5" width="19" height="19" rx="2" fill="url(#gb)" stroke="#333"/><rect x="3" y="3" width="10" height="14" fill="#fff" stroke="#555"/><rect x="15" y="5" width="2.5" height="10" fill="#8ab010"/></svg>
<div class="t" style="left:103px;top:709px;">Scroll Area</div>
<svg class="a" style="left:76px;top:729px;" width="21" height="22" viewBox="0 0 21 22"><defs><linearGradient id="gb" x1="0" y1="0" x2="0" y2="1"><stop offset="0" stop-color="#fafafa"/><stop offset="1" stop-color="#c8c8c8"/></linearGradient><linearGradient id="gg" x1="0" y1="0" x2="0" y2="1"><stop offset="0" stop-color="#b6d32a"/><stop offset="1" stop-color="#6c8c10"/></linearGradient></defs><path d="M1 1 L19 4 V7 L1 4Z" fill="#aaa" stroke="#555"/><path d="M1 4 L19 7 V9 L1 6Z" fill="#ccc" stroke="#555"/><path d="M1 7 L8 7 L10 9 L19 9 V19 H1Z" fill="url(#gg)" stroke="#222"/></svg>
<div class="t" style="left:103px;top:733px;">Tool Box</div>
<svg class="a" style="left:76px;top:754px;" width="21" height="22" viewBox="0 0 21 22"><defs><linearGradient id="gb" x1="0" y1="0" x2="0" y2="1"><stop offset="0" stop-color="#fafafa"/><stop offset="1" stop-color="#c8c8c8"/></linearGradient><linearGradient id="gg" x1="0" y1="0" x2="0" y2="1"><stop offset="0" stop-color="#b6d32a"/><stop offset="1" stop-color="#6c8c10"/></linearGradient></defs><rect x="0.5" y="3.5" width="19" height="13" fill="url(#gg)" stroke="#222"/><rect x="7" y="2" width="5" height="3" fill="#2a80d0"/><rect x="12" y="2" width="5" height="3" fill="#d02020"/></svg>
<div class="t" style="left:103px;top:757px;">Tab Widget</div>
<svg class="a" style="left:76px;top:778px;" width="21" height="22" viewBox="0 0 21 22"><defs><linearGradient id="gb" x1="0" y1="0" x2="0" y2="1"><stop offset="0" stop-color="#fafafa"/><stop offset="1" stop-color="#c8c8c8"/></linearGradient><linearGradient id="gg" x1="0" y1="0" x2="0" y2="1"><stop offset="0" stop-color="#b6d32a"/><stop offset="1" stop-color="#6c8c10"/></linearGradient></defs><rect x="6.5" y="5.5" width="12" height="13" rx="1.5" fill="#2050b0" stroke="#111"/><rect x="3.5" y="7.5" width="11" height="11" rx="1.5" fill="#c04010" stroke="#111"/><rect x="0.5" y="0.5" width="11" height="12" rx="1.5" fill="url(#gg)" stroke="#111"/><path d="M3 4 H8 M3 6 H8 M3 8 H8" stroke="#111"/></svg>
<div class="t" style="left:103px;top:781px;">Stacked Widget</div>
<svg class="a" style="left:76px;top:802px;" width="21" height="22" viewBox="0 0 21 22"><rect x="0.5" y="0.5" width="19" height="19" fill="#bbb" stroke="#3060d0"/><rect x="2.5" y="2.5" width="15" height="15" fill="#ccc" stroke="#eee"/><path d="M3 13 L9 3 M6 17 L14 3 M11 17 L17 7" stroke="#fff" stroke-width="2"/></svg>
<div class="t" style="left:103px;top:805px;">Frame</div>
<svg class="a" style="left:76px;top:825px;" width="21" height="22" viewBox="0 0 21 22"><rect x="0.5" y="0.5" width="19" height="19" fill="#ccc" stroke="#3060d0"/><path d="M3 13 L9 3 M6 17 L14 3 M11 17 L17 7" stroke="#fff" stroke-width="2"/></svg>
<div class="t" style="left:103px;top:829px;">Widget</div>
<svg class="a" style="left:76px;top:850px;" width="21" height="22" viewBox="0 0 21 22"><defs><linearGradient id="gb" x1="0" y1="0" x2="0" y2="1"><stop offset="0" stop-color="#fafafa"/><stop offset="1" stop-color="#c8c8c8"/></linearGradient><linearGradient id="gg" x1="0" y1="0" x2="0" y2="1"><stop offset="0" stop-color="#b6d32a"/><stop offset="1" stop-color="#6c8c10"/></linearGradient></defs><rect x="0.5" y="0.5" width="19" height="19" rx="1.5" fill="#eee" stroke="#444"/><rect x="9" y="1" width="10" height="8" fill="#8ac860"/><path d="M9 9 H19 M9 13 H19 M13 9 V19 M2 5 H7 M2 8 H7 M2 11 H7" stroke="#6080b0"/></svg>
<div class="t" style="left:103px;top:853px;">MDI Area</div>
<svg class="a" style="left:76px;top:873px;" width="21" height="22" viewBox="0 0 21 22"><rect x="0" y="0" width="20" height="20" fill="#000"/><rect x="2" y="3" width="16" height="14" fill="#ddd" stroke="#3050c0" stroke-dasharray="1.5 1"/></svg>
<div class="t" style="left:103px;top:877px;">Dock Widget</div>
<svg class="a" style="left:76px;top:895px;" width="21" height="22" viewBox="0 0 21 22"><rect x="5.5" y="5.5" width="13" height="14" fill="#d8d4cc" stroke="#222"/><path d="M8 5 V2 M15 5 V2 M1 13 H5" stroke="#222"/><circle cx="8" cy="2" r="1.3" fill="#fff" stroke="#222"/><circle cx="15" cy="2" r="1.3" fill="#fff" stroke="#222"/><circle cx="1.5" cy="13" r="1.3" fill="#fff" stroke="#222"/></svg>
<div class="t" style="left:103px;top:901px;">QAxWidget</div>
<div class="hd" style="top:920px"></div>
<svg class="a" style="left:74px;top:925px;" width="10" height="7" viewBox="0 0 10 7"><path d="M1 1.2 L4.8 5 L8.6 1.2" stroke="#444" stroke-width="1.9" fill="none"/></svg>
<div class="t" style="left:70px;width:183px;text-align:center;top:922px;">Input Widgets</div>
<svg class="a" style="left:76px;top:938px;" width="21" height="22" viewBox="0 0 21 22"><defs><linearGradient id="gb" x1="0" y1="0" x2="0" y2="1"><stop offset="0" stop-color="#fafafa"/><stop offset="1" stop-color="#c8c8c8"/></linearGradient><linearGradient id="gg" x1="0" y1="0" x2="0" y2="1"><stop offset="0" stop-color="#b6d32a"/><stop offset="1" stop-color="#6c8c10"/></linearGradient></defs><rect x="0.5" y="0.5" width="19" height="21" rx="1" fill="url(#gb)" stroke="#222"/><rect x="0" y="0" width="20" height="6" fill="#000"/><path d="M13 2 L17 2 L15 5Z" fill="#fff"/><path d="M3 10.5 H17 M3 14.5 H17 M3 18.5 H17" stroke="#4a80c8" stroke-width="2"/></svg>
<div class="t" style="left:103px;top:943px;">Combo Box</div>
<svg class="a" style="left:76px;top:962px;" width="21" height="22" viewBox="0 0 21 22"><defs><linearGradient id="fc" x1="0" y1="0" x2="0" y2="1"><stop offset="0" stop-color="#888"/><stop offset="1" stop-color="#ddd"/></linearGradient></defs><rect x="0.5" y="0.5" width="19" height="21" rx="1" fill="url(#fc)" stroke="#333"/><path d="M2 20 C6 20 7 16 9 9 C11 3 13 2 17 4 M6 9 H13" stroke="#b01010" stroke-width="1.5" fill="none"/></svg>
<div class="t" style="left:103px;top:967px;">Font Combo Box</div>
<svg class="a" style="left:76px;top:991px;" width="21" height="22" viewBox="0 0 21 22"><defs><linearGradient id="gb" x1="0" y1="0" x2="0" y2="1"><stop offset="0" stop-color="#fafafa"/><stop offset="1" stop-color="#c8c8c8"/></linearGradient><linearGradient id="gg" x1="0" y1="0" x2="0" y2="1"><stop offset="0" stop-color="#b6d32a"/><stop offset="1" stop-color="#6c8c10"/></linearGradient></defs><rect x="1.5" y="2.5" width="18" height="11" rx="2" fill="url(#gb)" stroke="#222"/><text x="10" y="11" font-size="8" font-weight="bold" font-family="Liberation Sans" text-anchor="middle" fill="#000">AB]</text></svg>
<div class="t" style="left:103px;top:991px;">Line Edit</div>
<svg class="a" style="left:76px;top:1015px;" width="21" height="22" viewBox="0 0 21 22"><defs><linearGradient id="gb" x1="0" y1="0" x2="0" y2="1"><stop offset="0" stop-color="#fafafa"/><stop offset="1" stop-color="#c8c8c8"/></linearGradient><linearGradient id="gg" x1="0" y1="0" x2="0" y2="1"><stop offset="0" stop-color="#b6d32a"/><stop offset="1" stop-color="#6c8c10"/></linearGradient></defs><rect x="1.5" y="2.5" width="18" height="11" rx="2" fill="url(#gb)" stroke="#222"/><text x="10" y="11" font-size="8" font-weight="bold" font-family="Liberation Sans" text-anchor="middle" fill="#000">AB]</text></svg>
<div class="a" style="left:70px;top:1009px;width:166px;height:4px;background:#fff"></div>
<div class="a" style="left:254px;top:70px;width:1104px;height:805px;background:#fff"></div>
<svg class="a" style="left:265px;top:81px" width="1093" height="765" shape-rendering="crispEdges"><defs><pattern id="pf" x="0" y="0" width="10" height="10" patternUnits="userSpaceOnUse"><rect width="1" height="1" fill="#8c8c8c"/></pattern></defs><rect width="1093" height="765" fill="#f0f0f0"/><rect width="1093" height="765" fill="url(#pf)"/></svg>
<div class="a" style="left:265px;top:845px;width:1093px;height:1px;background:#a0a0a0"></div>
<div class="a" style="left:274px;top:90px;width:1200px;height:746px;border:1px solid #f47a7a"></div>
<div class="a" style="left:275px;top:91px;width:168px;height:744px;border:1px solid #f47a7a"></div>
<div class="a" style="left:276px;top:98px;width:166px;height:183px;border:1px solid #d4d4d4"></div>
<div class="a" style="left:282px;top:95px;width:41px;height:6px;background:#f0f0f0"></div>
<div class="t" style="left:284px;top:92px;font-size:11px">Trainee</div>
<div class="a" style="left:276px;top:294px;width:166px;height:540px;border:1px solid #d4d4d4"></div>
<div class="a" style="left:282px;top:291px;width:28px;height:6px;background:#f0f0f0"></div>
<div class="t" style="left:284px;top:288px;font-size:11px">Chat</div>
<div class="a" style="left:286px;top:115px;width:146px;height:34px;border:1px solid #f47a7a"></div>
<div class="a" style="left:400px;top:117px;width:30px;height:30px;border-radius:50%;background:#95a5a6"></div>
<div class="t" style="left:287px;top:127px;font-size:11px;transform:scaleX(0.9201);transform-origin:0 0;">Name</div>
<div class="a" style="left:286px;top:155px;width:146px;height:1px;background:#a0a0a0"></div>
<div class="a" style="left:286px;top:156px;width:146px;height:1px;background:#fff"></div>
<div class="a" style="left:286px;top:164px;width:146px;height:15px;border:1px solid #f47a7a"></div>
<div class="t" style="left:287px;top:165px;font-size:11px;transform:scaleX(0.9334);transform-origin:0 0;">Assigned AMM</div>
<div class="t" style="left:425px;top:165px;font-size:11px">0</div>
<div class="a" style="left:286px;top:185px;width:146px;height:15px;border:1px solid #f47a7a"></div>
<div class="t" style="left:287px;top:186px;font-size:11px;transform:scaleX(0.9438);transform-origin:0 0;">Assigned FIM</div>
<div class="t" style="left:425px;top:186px;font-size:11px">0</div>
<div class="a" style="left:286px;top:215px;width:146px;height:15px;border:1px solid #f47a7a"></div>
<div class="t" style="left:287px;top:216px;font-size:11px;transform:scaleX(0.9675);transform-origin:0 0;">Time spent on the simulator</div>
<div class="t" style="left:425px;top:216px;font-size:11px">0</div>
<div class="a" style="left:286px;top:236px;width:146px;height:15px;border:1px solid #f47a7a"></div>
<div class="t" style="left:287px;top:237px;font-size:11px;transform:scaleX(0.9549);transform-origin:0 0;">Last login</div>
<div class="t" style="left:425px;top:237px;font-size:11px">0</div>
<div class="a" style="left:286px;top:257px;width:146px;height:15px;border:1px solid #f47a7a"></div>
<div class="t" style="left:287px;top:258px;font-size:11px;transform:scaleX(1.0000);transform-origin:0 0;">Last exit</div>
<div class="t" style="left:425px;top:258px;font-size:11px">0</div>
<div class="a" style="left:286px;top:206px;width:146px;height:1px;background:#a0a0a0"></div>
<div class="a" style="left:286px;top:207px;width:146px;height:1px;background:#fff"></div>
<div class="a" style="left:286px;top:311px;width:146px;height:513px;border:1px solid #f47a7a"></div>
<div class="a" style="left:449px;top:97px;width:1000px;height:737px;border:1px solid #d4d4d4"></div>
<div class="a" style="left:455px;top:94px;width:33px;height:6px;background:#f0f0f0"></div>
<div class="t" style="left:457px;top:91px;font-size:11px">Tasks</div>
<div class="a" style="left:459px;top:134px;width:1000px;height:690px;border:1px solid #d4d4d4;background:#fff"></div>
<svg class="a" style="left:461px;top:136px" width="897" height="686" shape-rendering="crispEdges"><defs><pattern id="pt" x="0" y="0" width="10" height="10" patternUnits="userSpaceOnUse"><rect width="1" height="1" fill="#8c8c8c"/></pattern></defs><rect width="897" height="686" fill="#f0f0f0"/><rect width="897" height="686" fill="url(#pt)"/></svg>
<div class="a" style="left:507px;top:116px;width:39px;height:19px;border:1px solid #d9d9d9;border-bottom:none;background:#f0f0f0"></div>
<div class="a" style="left:459px;top:114px;width:49px;height:22px;border:1px solid #d9d9d9;border-bottom:none;background:#fff"></div>
<div class="t" style="left:471px;top:119px;font-size:11px;transform:scaleX(0.8575);transform-origin:0 0;">AMM</div>
<div class="t" style="left:517px;top:120px;font-size:11px;transform:scaleX(0.9294);transform-origin:0 0;">FIM</div>
<div class="a" style="left:470px;top:145px;width:887px;height:667px;border:3px solid #f47a7a"></div>
<div class="a" style="left:472px;top:147px;width:884px;height:329px;border:1px solid #f47a7a"></div>
<div class="a" style="left:472px;top:482px;width:884px;height:329px;border:1px solid #f47a7a"></div>
<div class="t" style="left:472px;top:305px;font-size:11px">List</div>
<div class="t" style="left:472px;top:640px;font-size:11px">Attached</div>
<div class="a" style="left:468px;top:143px;width:6px;height:6px;border:1px solid #0000ff;background:#a0a0a0"></div>
<div class="a" style="left:910px;top:143px;width:6px;height:6px;border:1px solid #0000ff;background:#a0a0a0"></div>
<div class="a" style="left:1352px;top:143px;width:6px;height:6px;border:1px solid #0000ff;background:#a0a0a0"></div>
<div class="a" style="left:468px;top:475px;width:6px;height:6px;border:1px solid #0000ff;background:#a0a0a0"></div>
<div class="a" style="left:1352px;top:475px;width:6px;height:6px;border:1px solid #0000ff;background:#a0a0a0"></div>
<div class="a" style="left:468px;top:808px;width:6px;height:6px;border:1px solid #0000ff;background:#a0a0a0"></div>
<div class="a" style="left:910px;top:808px;width:6px;height:6px;border:1px solid #0000ff;background:#a0a0a0"></div>
<div class="a" style="left:1352px;top:808px;width:6px;height:6px;border:1px solid #0000ff;background:#a0a0a0"></div>
<div class="a" style="left:254px;top:846px;width:1104px;height:13px;background:#fff"></div>
<div class="a" style="left:254px;top:859px;width:1104px;height:16px;background:#f0f0f0"></div>
<div class="a" style="left:271px;top:860px;width:1029px;height:15px;background:#cdcdcd"></div>
<svg class="a" style="left:258px;top:863px;" width="8" height="10" viewBox="0 0 8 10"><path d="M6 1 L2 5 L6 9" stroke="#555" stroke-width="1.6" fill="none"/></svg>
<svg class="a" style="left:1345px;top:863px;" width="8" height="10" viewBox="0 0 8 10"><path d="M2 1 L6 5 L2 9" stroke="#555" stroke-width="1.6" fill="none"/></svg>
<div class="a" style="left:254px;top:875px;width:1104px;height:1px;background:#000"></div>
<div class="a" style="left:253px;top:70px;width:1px;height:943px;background:#000"></div>
<div class="a" style="left:1358px;top:70px;width:1px;height:943px;background:#000"></div>
<div class="a" style="left:1359px;top:70px;width:561px;height:943px;background:#fff"></div>
<div class="a" style="left:1359px;top:70px;width:561px;height:20px;background:#fff;border-bottom:1px solid #6a6a6a;border-right:1px solid #6a6a6a"></div>
<div class="a" style="left:1903px;top:96px;width:1px;height:22px;background:#e5e5e5"></div>
<div class="t" style="left:1362px;top:74px;color:#8e8e8e">Фильтр</div>
<div class="a" style="left:1359px;top:90px;width:561px;height:6px;background:#f0f0f0"></div>
<div class="t" style="left:1363px;top:101px;">Объект</div>
<div class="t" style="left:1709px;top:101px;">Класс</div>
<div class="a" style="left:1703px;top:97px;width:1px;height:21px;background:#e5e5e5"></div>
<div class="a" style="left:1903px;top:96px;width:17px;height:439px;background:#f0f0f0"></div>
<div class="a" style="left:1904px;top:284px;width:15px;height:233px;background:#cdcdcd"></div>
<svg class="a" style="left:1907px;top:101px;" width="9" height="8" viewBox="0 0 9 8"><path d="M1.5 6 L4.5 2.5 L7.5 6" stroke="#505050" stroke-width="2" fill="none" stroke-linecap="butt"/></svg>
<svg class="a" style="left:1907px;top:521px;" width="9" height="8" viewBox="0 0 9 8"><path d="M1.5 2 L4.5 5.5 L7.5 2" stroke="#505050" stroke-width="2" fill="none" stroke-linecap="butt"/></svg>
<div class="t" style="left:1482px;top:121px;">label_14</div>
<div class="t" style="left:1708px;top:121px;">QLabel</div>
<div class="a" style="left:1479px;top:136px;width:424px;height:17px;background:#f5f5f5"></div>
<div class="t" style="left:1482px;top:138px;">lblTimeExit</div>
<div class="t" style="left:1708px;top:138px;">QLabel</div>
<svg class="a" style="left:1443px;top:160px;" width="10" height="7" viewBox="0 0 10 7"><path d="M1 1.2 L5 5 L9 1.2" stroke="#404040" stroke-width="1.7" fill="none"/></svg>
<svg class="a" style="left:1463px;top:156px" width="14" height="14" viewBox="0 0 20 20"><defs><linearGradient id="lh" x1="0" y1="0" x2="1" y2="0"><stop offset="0" stop-color="#e8f6ff"/><stop offset=".5" stop-color="#9ed4f4"/><stop offset="1" stop-color="#5e9ccc"/></linearGradient></defs><rect x="1.0" y="1" width="5" height="18" rx="1.5" fill="url(#lh)" stroke="#4a6e90" stroke-width="1.1"/><rect x="7.3" y="1" width="5" height="18" rx="1.5" fill="url(#lh)" stroke="#4a6e90" stroke-width="1.1"/><rect x="13.6" y="1" width="5" height="18" rx="1.5" fill="url(#lh)" stroke="#4a6e90" stroke-width="1.1"/></svg>
<div class="t" style="left:1484px;top:157px;">horizontalLayout_AssFIM</div>
<svg class="a" style="left:1709px;top:156px" width="14" height="14" viewBox="0 0 20 20"><defs><linearGradient id="lh" x1="0" y1="0" x2="1" y2="0"><stop offset="0" stop-color="#e8f6ff"/><stop offset=".5" stop-color="#9ed4f4"/><stop offset="1" stop-color="#5e9ccc"/></linearGradient></defs><rect x="1.0" y="1" width="5" height="18" rx="1.5" fill="url(#lh)" stroke="#4a6e90" stroke-width="1.1"/><rect x="7.3" y="1" width="5" height="18" rx="1.5" fill="url(#lh)" stroke="#4a6e90" stroke-width="1.1"/><rect x="13.6" y="1" width="5" height="18" rx="1.5" fill="url(#lh)" stroke="#4a6e90" stroke-width="1.1"/></svg>
<div class="t" style="left:1730px;top:157px;">QHBoxLayout</div>
<div class="a" style="left:1479px;top:173px;width:424px;height:17px;background:#f5f5f5"></div>
<div class="t" style="left:1482px;top:175px;">label_11</div>
<div class="t" style="left:1708px;top:175px;">QLabel</div>
<div class="t" style="left:1482px;top:192px;">lblCntFIM</div>
<div class="t" style="left:1708px;top:192px;">QLabel</div>
<div class="a" style="left:1459px;top:207px;width:444px;height:20px;background:#f5f5f5"></div>
<svg class="a" style="left:1443px;top:214px;" width="10" height="7" viewBox="0 0 10 7"><path d="M1 1.2 L5 5 L9 1.2" stroke="#404040" stroke-width="1.7" fill="none"/></svg>
<svg class="a" style="left:1463px;top:210px" width="14" height="14" viewBox="0 0 20 20"><defs><linearGradient id="lh" x1="0" y1="0" x2="1" y2="0"><stop offset="0" stop-color="#e8f6ff"/><stop offset=".5" stop-color="#9ed4f4"/><stop offset="1" stop-color="#5e9ccc"/></linearGradient></defs><rect x="1.0" y="1" width="5" height="18" rx="1.5" fill="url(#lh)" stroke="#4a6e90" stroke-width="1.1"/><rect x="7.3" y="1" width="5" height="18" rx="1.5" fill="url(#lh)" stroke="#4a6e90" stroke-width="1.1"/><rect x="13.6" y="1" width="5" height="18" rx="1.5" fill="url(#lh)" stroke="#4a6e90" stroke-width="1.1"/></svg>
<div class="t" style="left:1484px;top:211px;">horizontalLayout_Login</div>
<svg class="a" style="left:1709px;top:210px" width="14" height="14" viewBox="0 0 20 20"><defs><linearGradient id="lh" x1="0" y1="0" x2="1" y2="0"><stop offset="0" stop-color="#e8f6ff"/><stop offset=".5" stop-color="#9ed4f4"/><stop offset="1" stop-color="#5e9ccc"/></linearGradient></defs><rect x="1.0" y="1" width="5" height="18" rx="1.5" fill="url(#lh)" stroke="#4a6e90" stroke-width="1.1"/><rect x="7.3" y="1" width="5" height="18" rx="1.5" fill="url(#lh)" stroke="#4a6e90" stroke-width="1.1"/><rect x="13.6" y="1" width="5" height="18" rx="1.5" fill="url(#lh)" stroke="#4a6e90" stroke-width="1.1"/></svg>
<div class="t" style="left:1730px;top:211px;">QHBoxLayout</div>
<div class="t" style="left:1482px;top:229px;">label_13</div>
<div class="t" style="left:1708px;top:229px;">QLabel</div>
<div class="a" style="left:1479px;top:244px;width:424px;height:17px;background:#f5f5f5"></div>
<div class="t" style="left:1482px;top:246px;">lblLoginTime</div>
<div class="t" style="left:1708px;top:246px;">QLabel</div>
<div class="t" style="left:1462px;top:263px;">line_1</div>
<div class="t" style="left:1708px;top:263px;">Line</div>
<div class="a" style="left:1459px;top:278px;width:444px;height:17px;background:#f5f5f5"></div>
<div class="t" style="left:1462px;top:280px;">line_2</div>
<div class="t" style="left:1708px;top:280px;">Line</div>
<svg class="a" style="left:1403px;top:302px;" width="10" height="7" viewBox="0 0 10 7"><path d="M1 1.2 L5 5 L9 1.2" stroke="#404040" stroke-width="1.7" fill="none"/></svg>
<svg class="a" style="left:1423px;top:298px" width="14" height="14" viewBox="0 0 20 20"><defs><linearGradient id="lg" x1="0" y1="0" x2="1" y2="1"><stop offset="0" stop-color="#e8f6ff"/><stop offset="1" stop-color="#7ab8e0"/></linearGradient></defs><rect x="1.0" y="1.0" width="5" height="5" rx="1" fill="url(#lg)" stroke="#4a6e90" stroke-width="1.1"/><rect x="1.0" y="7.3" width="5" height="5" rx="1" fill="url(#lg)" stroke="#4a6e90" stroke-width="1.1"/><rect x="1.0" y="13.6" width="5" height="5" rx="1" fill="url(#lg)" stroke="#4a6e90" stroke-width="1.1"/><rect x="7.3" y="1.0" width="5" height="5" rx="1" fill="url(#lg)" stroke="#4a6e90" stroke-width="1.1"/><rect x="7.3" y="7.3" width="5" height="5" rx="1" fill="url(#lg)" stroke="#4a6e90" stroke-width="1.1"/><rect x="7.3" y="13.6" width="5" height="5" rx="1" fill="url(#lg)" stroke="#4a6e90" stroke-width="1.1"/><rect x="13.6" y="1.0" width="5" height="5" rx="1" fill="url(#lg)" stroke="#4a6e90" stroke-width="1.1"/><rect x="13.6" y="7.3" width="5" height="5" rx="1" fill="url(#lg)" stroke="#4a6e90" stroke-width="1.1"/><rect x="13.6" y="13.6" width="5" height="5" rx="1" fill="url(#lg)" stroke="#4a6e90" stroke-width="1.1"/></svg>
<div class="t" style="left:1444px;top:299px;">groupBox_Tasks</div>
<div class="t" style="left:1708px;top:299px;">QGroupBox</div>
<div class="a" style="left:1439px;top:315px;width:464px;height:17px;background:#f5f5f5"></div>
<svg class="a" style="left:1423px;top:320px;" width="10" height="7" viewBox="0 0 10 7"><path d="M1 1.2 L5 5 L9 1.2" stroke="#404040" stroke-width="1.7" fill="none"/></svg>
<div class="t" style="left:1442px;top:317px;">tabWidget</div>
<div class="t" style="left:1708px;top:317px;">QTabWidget</div>
<svg class="a" style="left:1443px;top:339px;" width="10" height="7" viewBox="0 0 10 7"><path d="M1 1.2 L5 5 L9 1.2" stroke="#404040" stroke-width="1.7" fill="none"/></svg>
<svg class="a" style="left:1463px;top:335px" width="14" height="14" viewBox="0 0 20 20"><defs><linearGradient id="lg" x1="0" y1="0" x2="1" y2="1"><stop offset="0" stop-color="#e8f6ff"/><stop offset="1" stop-color="#7ab8e0"/></linearGradient></defs><rect x="1.0" y="1.0" width="5" height="5" rx="1" fill="url(#lg)" stroke="#4a6e90" stroke-width="1.1"/><rect x="1.0" y="7.3" width="5" height="5" rx="1" fill="url(#lg)" stroke="#4a6e90" stroke-width="1.1"/><rect x="1.0" y="13.6" width="5" height="5" rx="1" fill="url(#lg)" stroke="#4a6e90" stroke-width="1.1"/><rect x="7.3" y="1.0" width="5" height="5" rx="1" fill="url(#lg)" stroke="#4a6e90" stroke-width="1.1"/><rect x="7.3" y="7.3" width="5" height="5" rx="1" fill="url(#lg)" stroke="#4a6e90" stroke-width="1.1"/><rect x="7.3" y="13.6" width="5" height="5" rx="1" fill="url(#lg)" stroke="#4a6e90" stroke-width="1.1"/><rect x="13.6" y="1.0" width="5" height="5" rx="1" fill="url(#lg)" stroke="#4a6e90" stroke-width="1.1"/><rect x="13.6" y="7.3" width="5" height="5" rx="1" fill="url(#lg)" stroke="#4a6e90" stroke-width="1.1"/><rect x="13.6" y="13.6" width="5" height="5" rx="1" fill="url(#lg)" stroke="#4a6e90" stroke-width="1.1"/></svg>
<div class="t" style="left:1484px;top:336px;">tab_AMM</div>
<div class="t" style="left:1708px;top:336px;">QWidget</div>
<div class="a" style="left:1479px;top:352px;width:424px;height:20px;background:#f5f5f5"></div>
<svg class="a" style="left:1463px;top:359px;" width="10" height="7" viewBox="0 0 10 7"><path d="M1 1.2 L5 5 L9 1.2" stroke="#404040" stroke-width="1.7" fill="none"/></svg>
<svg class="a" style="left:1483px;top:355px" width="14" height="14" viewBox="0 0 20 20"><defs><linearGradient id="lh" x1="0" y1="0" x2="1" y2="0"><stop offset="0" stop-color="#e8f6ff"/><stop offset=".5" stop-color="#9ed4f4"/><stop offset="1" stop-color="#5e9ccc"/></linearGradient></defs><rect x="1.0" y="1" width="5" height="18" rx="1.5" fill="url(#lh)" stroke="#4a6e90" stroke-width="1.1"/><rect x="7.3" y="1" width="5" height="18" rx="1.5" fill="url(#lh)" stroke="#4a6e90" stroke-width="1.1"/><rect x="13.6" y="1" width="5" height="18" rx="1.5" fill="url(#lh)" stroke="#4a6e90" stroke-width="1.1"/></svg>
<div class="t" style="left:1504px;top:356px;">horizontalLayout_AMM</div>
<svg class="a" style="left:1709px;top:355px" width="14" height="14" viewBox="0 0 20 20"><defs><linearGradient id="lh" x1="0" y1="0" x2="1" y2="0"><stop offset="0" stop-color="#e8f6ff"/><stop offset=".5" stop-color="#9ed4f4"/><stop offset="1" stop-color="#5e9ccc"/></linearGradient></defs><rect x="1.0" y="1" width="5" height="18" rx="1.5" fill="url(#lh)" stroke="#4a6e90" stroke-width="1.1"/><rect x="7.3" y="1" width="5" height="18" rx="1.5" fill="url(#lh)" stroke="#4a6e90" stroke-width="1.1"/><rect x="13.6" y="1" width="5" height="18" rx="1.5" fill="url(#lh)" stroke="#4a6e90" stroke-width="1.1"/></svg>
<div class="t" style="left:1730px;top:356px;">QHBoxLayout</div>
<div class="a" style="left:1499px;top:372px;width:404px;height:20px;background:#cce8ff"></div>
<div class="a" style="left:1500px;top:372px;width:204px;height:20px;border:1px dotted #000"></div>
<svg class="a" style="left:1483px;top:379px;" width="10" height="7" viewBox="0 0 10 7"><path d="M1 1.2 L5 5 L9 1.2" stroke="#404040" stroke-width="1.7" fill="none"/></svg>
<svg class="a" style="left:1503px;top:375px" width="14" height="14" viewBox="0 0 20 20"><defs><linearGradient id="lv" x1="0" y1="0" x2="0" y2="1"><stop offset="0" stop-color="#e8f6ff"/><stop offset=".5" stop-color="#9ed4f4"/><stop offset="1" stop-color="#5e9ccc"/></linearGradient></defs><rect x="1" y="1.0" width="18" height="5" rx="1.5" fill="url(#lv)" stroke="#4a6e90" stroke-width="1.1"/><rect x="1" y="7.3" width="18" height="5" rx="1.5" fill="url(#lv)" stroke="#4a6e90" stroke-width="1.1"/><rect x="1" y="13.6" width="18" height="5" rx="1.5" fill="url(#lv)" stroke="#4a6e90" stroke-width="1.1"/></svg>
<div class="t" style="left:1524px;top:376px;">verticalLayout_AMM</div>
<svg class="a" style="left:1709px;top:375px" width="14" height="14" viewBox="0 0 20 20"><defs><linearGradient id="lv" x1="0" y1="0" x2="0" y2="1"><stop offset="0" stop-color="#e8f6ff"/><stop offset=".5" stop-color="#9ed4f4"/><stop offset="1" stop-color="#5e9ccc"/></linearGradient></defs><rect x="1" y="1.0" width="18" height="5" rx="1.5" fill="url(#lv)" stroke="#4a6e90" stroke-width="1.1"/><rect x="1" y="7.3" width="18" height="5" rx="1.5" fill="url(#lv)" stroke="#4a6e90" stroke-width="1.1"/><rect x="1" y="13.6" width="18" height="5" rx="1.5" fill="url(#lv)" stroke="#4a6e90" stroke-width="1.1"/></svg>
<div class="t" style="left:1730px;top:376px;">QVBoxLayout</div>
<div class="a" style="left:1519px;top:392px;width:384px;height:20px;background:#f5f5f5"></div>
<svg class="a" style="left:1506px;top:397px;" width="7" height="10" viewBox="0 0 7 10"><path d="M1 1 L5 5 L1 9" stroke="#9a9a9a" stroke-width="1.5" fill="none"/></svg>
<svg class="a" style="left:1523px;top:395px" width="14" height="14" viewBox="0 0 20 20"><defs><linearGradient id="lv" x1="0" y1="0" x2="0" y2="1"><stop offset="0" stop-color="#e8f6ff"/><stop offset=".5" stop-color="#9ed4f4"/><stop offset="1" stop-color="#5e9ccc"/></linearGradient></defs><rect x="1" y="1.0" width="18" height="5" rx="1.5" fill="url(#lv)" stroke="#4a6e90" stroke-width="1.1"/><rect x="1" y="7.3" width="18" height="5" rx="1.5" fill="url(#lv)" stroke="#4a6e90" stroke-width="1.1"/><rect x="1" y="13.6" width="18" height="5" rx="1.5" fill="url(#lv)" stroke="#4a6e90" stroke-width="1.1"/></svg>
<div class="t" style="left:1544px;top:396px;">verticalLayout_AMMcommon</div>
<svg class="a" style="left:1709px;top:395px" width="14" height="14" viewBox="0 0 20 20"><defs><linearGradient id="lv" x1="0" y1="0" x2="0" y2="1"><stop offset="0" stop-color="#e8f6ff"/><stop offset=".5" stop-color="#9ed4f4"/><stop offset="1" stop-color="#5e9ccc"/></linearGradient></defs><rect x="1" y="1.0" width="18" height="5" rx="1.5" fill="url(#lv)" stroke="#4a6e90" stroke-width="1.1"/><rect x="1" y="7.3" width="18" height="5" rx="1.5" fill="url(#lv)" stroke="#4a6e90" stroke-width="1.1"/><rect x="1" y="13.6" width="18" height="5" rx="1.5" fill="url(#lv)" stroke="#4a6e90" stroke-width="1.1"/></svg>
<div class="t" style="left:1730px;top:396px;">QVBoxLayout</div>
<svg class="a" style="left:1506px;top:417px;" width="7" height="10" viewBox="0 0 7 10"><path d="M1 1 L5 5 L1 9" stroke="#9a9a9a" stroke-width="1.5" fill="none"/></svg>
<svg class="a" style="left:1523px;top:415px" width="14" height="14" viewBox="0 0 20 20"><defs><linearGradient id="lv" x1="0" y1="0" x2="0" y2="1"><stop offset="0" stop-color="#e8f6ff"/><stop offset=".5" stop-color="#9ed4f4"/><stop offset="1" stop-color="#5e9ccc"/></linearGradient></defs><rect x="1" y="1.0" width="18" height="5" rx="1.5" fill="url(#lv)" stroke="#4a6e90" stroke-width="1.1"/><rect x="1" y="7.3" width="18" height="5" rx="1.5" fill="url(#lv)" stroke="#4a6e90" stroke-width="1.1"/><rect x="1" y="13.6" width="18" height="5" rx="1.5" fill="url(#lv)" stroke="#4a6e90" stroke-width="1.1"/></svg>
<div class="t" style="left:1544px;top:416px;">verticalLayout_AMMpersonal</div>
<svg class="a" style="left:1709px;top:415px" width="14" height="14" viewBox="0 0 20 20"><defs><linearGradient id="lv" x1="0" y1="0" x2="0" y2="1"><stop offset="0" stop-color="#e8f6ff"/><stop offset=".5" stop-color="#9ed4f4"/><stop offset="1" stop-color="#5e9ccc"/></linearGradient></defs><rect x="1" y="1.0" width="18" height="5" rx="1.5" fill="url(#lv)" stroke="#4a6e90" stroke-width="1.1"/><rect x="1" y="7.3" width="18" height="5" rx="1.5" fill="url(#lv)" stroke="#4a6e90" stroke-width="1.1"/><rect x="1" y="13.6" width="18" height="5" rx="1.5" fill="url(#lv)" stroke="#4a6e90" stroke-width="1.1"/></svg>
<div class="t" style="left:1730px;top:416px;">QVBoxLayout</div>
<div class="a" style="left:1459px;top:432px;width:444px;height:20px;background:#f5f5f5"></div>
<svg class="a" style="left:1443px;top:439px;" width="10" height="7" viewBox="0 0 10 7"><path d="M1 1.2 L5 5 L9 1.2" stroke="#404040" stroke-width="1.7" fill="none"/></svg>
<svg class="a" style="left:1463px;top:435px" width="14" height="14" viewBox="0 0 20 20"><defs><linearGradient id="lg" x1="0" y1="0" x2="1" y2="1"><stop offset="0" stop-color="#e8f6ff"/><stop offset="1" stop-color="#7ab8e0"/></linearGradient></defs><rect x="1.0" y="1.0" width="5" height="5" rx="1" fill="url(#lg)" stroke="#4a6e90" stroke-width="1.1"/><rect x="1.0" y="7.3" width="5" height="5" rx="1" fill="url(#lg)" stroke="#4a6e90" stroke-width="1.1"/><rect x="1.0" y="13.6" width="5" height="5" rx="1" fill="url(#lg)" stroke="#4a6e90" stroke-width="1.1"/><rect x="7.3" y="1.0" width="5" height="5" rx="1" fill="url(#lg)" stroke="#4a6e90" stroke-width="1.1"/><rect x="7.3" y="7.3" width="5" height="5" rx="1" fill="url(#lg)" stroke="#4a6e90" stroke-width="1.1"/><rect x="7.3" y="13.6" width="5" height="5" rx="1" fill="url(#lg)" stroke="#4a6e90" stroke-width="1.1"/><rect x="13.6" y="1.0" width="5" height="5" rx="1" fill="url(#lg)" stroke="#4a6e90" stroke-width="1.1"/><rect x="13.6" y="7.3" width="5" height="5" rx="1" fill="url(#lg)" stroke="#4a6e90" stroke-width="1.1"/><rect x="13.6" y="13.6" width="5" height="5" rx="1" fill="url(#lg)" stroke="#4a6e90" stroke-width="1.1"/></svg>
<div class="t" style="left:1484px;top:436px;">tab_FIM</div>
<div class="t" style="left:1708px;top:436px;">QWidget</div>
<svg class="a" style="left:1463px;top:459px;" width="10" height="7" viewBox="0 0 10 7"><path d="M1 1.2 L5 5 L9 1.2" stroke="#404040" stroke-width="1.7" fill="none"/></svg>
<svg class="a" style="left:1483px;top:455px" width="14" height="14" viewBox="0 0 20 20"><defs><linearGradient id="lh" x1="0" y1="0" x2="1" y2="0"><stop offset="0" stop-color="#e8f6ff"/><stop offset=".5" stop-color="#9ed4f4"/><stop offset="1" stop-color="#5e9ccc"/></linearGradient></defs><rect x="1.0" y="1" width="5" height="18" rx="1.5" fill="url(#lh)" stroke="#4a6e90" stroke-width="1.1"/><rect x="7.3" y="1" width="5" height="18" rx="1.5" fill="url(#lh)" stroke="#4a6e90" stroke-width="1.1"/><rect x="13.6" y="1" width="5" height="18" rx="1.5" fill="url(#lh)" stroke="#4a6e90" stroke-width="1.1"/></svg>
<div class="t" style="left:1504px;top:456px;">horizontalLayout_FIM</div>
<svg class="a" style="left:1709px;top:455px" width="14" height="14" viewBox="0 0 20 20"><defs><linearGradient id="lh" x1="0" y1="0" x2="1" y2="0"><stop offset="0" stop-color="#e8f6ff"/><stop offset=".5" stop-color="#9ed4f4"/><stop offset="1" stop-color="#5e9ccc"/></linearGradient></defs><rect x="1.0" y="1" width="5" height="18" rx="1.5" fill="url(#lh)" stroke="#4a6e90" stroke-width="1.1"/><rect x="7.3" y="1" width="5" height="18" rx="1.5" fill="url(#lh)" stroke="#4a6e90" stroke-width="1.1"/><rect x="13.6" y="1" width="5" height="18" rx="1.5" fill="url(#lh)" stroke="#4a6e90" stroke-width="1.1"/></svg>
<div class="t" style="left:1730px;top:456px;">QHBoxLayout</div>
<div class="a" style="left:1499px;top:472px;width:404px;height:20px;background:#dce9f6"></div>
<svg class="a" style="left:1483px;top:479px;" width="10" height="7" viewBox="0 0 10 7"><path d="M1 1.2 L5 5 L9 1.2" stroke="#404040" stroke-width="1.7" fill="none"/></svg>
<svg class="a" style="left:1503px;top:475px" width="14" height="14" viewBox="0 0 20 20"><defs><linearGradient id="lv" x1="0" y1="0" x2="0" y2="1"><stop offset="0" stop-color="#e8f6ff"/><stop offset=".5" stop-color="#9ed4f4"/><stop offset="1" stop-color="#5e9ccc"/></linearGradient></defs><rect x="1" y="1.0" width="18" height="5" rx="1.5" fill="url(#lv)" stroke="#4a6e90" stroke-width="1.1"/><rect x="1" y="7.3" width="18" height="5" rx="1.5" fill="url(#lv)" stroke="#4a6e90" stroke-width="1.1"/><rect x="1" y="13.6" width="18" height="5" rx="1.5" fill="url(#lv)" stroke="#4a6e90" stroke-width="1.1"/></svg>
<div class="t" style="left:1524px;top:476px;">verticalLayout_FIM</div>
<svg class="a" style="left:1709px;top:475px" width="14" height="14" viewBox="0 0 20 20"><defs><linearGradient id="lv" x1="0" y1="0" x2="0" y2="1"><stop offset="0" stop-color="#e8f6ff"/><stop offset=".5" stop-color="#9ed4f4"/><stop offset="1" stop-color="#5e9ccc"/></linearGradient></defs><rect x="1" y="1.0" width="18" height="5" rx="1.5" fill="url(#lv)" stroke="#4a6e90" stroke-width="1.1"/><rect x="1" y="7.3" width="18" height="5" rx="1.5" fill="url(#lv)" stroke="#4a6e90" stroke-width="1.1"/><rect x="1" y="13.6" width="18" height="5" rx="1.5" fill="url(#lv)" stroke="#4a6e90" stroke-width="1.1"/></svg>
<div class="t" style="left:1730px;top:476px;">QVBoxLayout</div>
<svg class="a" style="left:1506px;top:497px;" width="7" height="10" viewBox="0 0 7 10"><path d="M1 1 L5 5 L1 9" stroke="#9a9a9a" stroke-width="1.5" fill="none"/></svg>
<svg class="a" style="left:1523px;top:495px" width="14" height="14" viewBox="0 0 20 20"><defs><linearGradient id="lv" x1="0" y1="0" x2="0" y2="1"><stop offset="0" stop-color="#e8f6ff"/><stop offset=".5" stop-color="#9ed4f4"/><stop offset="1" stop-color="#5e9ccc"/></linearGradient></defs><rect x="1" y="1.0" width="18" height="5" rx="1.5" fill="url(#lv)" stroke="#4a6e90" stroke-width="1.1"/><rect x="1" y="7.3" width="18" height="5" rx="1.5" fill="url(#lv)" stroke="#4a6e90" stroke-width="1.1"/><rect x="1" y="13.6" width="18" height="5" rx="1.5" fill="url(#lv)" stroke="#4a6e90" stroke-width="1.1"/></svg>
<div class="t" style="left:1544px;top:496px;">verticalLayout_FIMcommon</div>
<svg class="a" style="left:1709px;top:495px" width="14" height="14" viewBox="0 0 20 20"><defs><linearGradient id="lv" x1="0" y1="0" x2="0" y2="1"><stop offset="0" stop-color="#e8f6ff"/><stop offset=".5" stop-color="#9ed4f4"/><stop offset="1" stop-color="#5e9ccc"/></linearGradient></defs><rect x="1" y="1.0" width="18" height="5" rx="1.5" fill="url(#lv)" stroke="#4a6e90" stroke-width="1.1"/><rect x="1" y="7.3" width="18" height="5" rx="1.5" fill="url(#lv)" stroke="#4a6e90" stroke-width="1.1"/><rect x="1" y="13.6" width="18" height="5" rx="1.5" fill="url(#lv)" stroke="#4a6e90" stroke-width="1.1"/></svg>
<div class="t" style="left:1730px;top:496px;">QVBoxLayout</div>
<div class="a" style="left:1519px;top:512px;width:384px;height:20px;background:#f5f5f5"></div>
<svg class="a" style="left:1506px;top:517px;" width="7" height="10" viewBox="0 0 7 10"><path d="M1 1 L5 5 L1 9" stroke="#9a9a9a" stroke-width="1.5" fill="none"/></svg>
<svg class="a" style="left:1523px;top:515px" width="14" height="14" viewBox="0 0 20 20"><defs><linearGradient id="lv" x1="0" y1="0" x2="0" y2="1"><stop offset="0" stop-color="#e8f6ff"/><stop offset=".5" stop-color="#9ed4f4"/><stop offset="1" stop-color="#5e9ccc"/></linearGradient></defs><rect x="1" y="1.0" width="18" height="5" rx="1.5" fill="url(#lv)" stroke="#4a6e90" stroke-width="1.1"/><rect x="1" y="7.3" width="18" height="5" rx="1.5" fill="url(#lv)" stroke="#4a6e90" stroke-width="1.1"/><rect x="1" y="13.6" width="18" height="5" rx="1.5" fill="url(#lv)" stroke="#4a6e90" stroke-width="1.1"/></svg>
<div class="t" style="left:1544px;top:516px;">verticalLayout_FIMpersonal</div>
<svg class="a" style="left:1709px;top:515px" width="14" height="14" viewBox="0 0 20 20"><defs><linearGradient id="lv" x1="0" y1="0" x2="0" y2="1"><stop offset="0" stop-color="#e8f6ff"/><stop offset=".5" stop-color="#9ed4f4"/><stop offset="1" stop-color="#5e9ccc"/></linearGradient></defs><rect x="1" y="1.0" width="18" height="5" rx="1.5" fill="url(#lv)" stroke="#4a6e90" stroke-width="1.1"/><rect x="1" y="7.3" width="18" height="5" rx="1.5" fill="url(#lv)" stroke="#4a6e90" stroke-width="1.1"/><rect x="1" y="13.6" width="18" height="5" rx="1.5" fill="url(#lv)" stroke="#4a6e90" stroke-width="1.1"/></svg>
<div class="t" style="left:1730px;top:516px;">QVBoxLayout</div>
<div class="a" style="left:1782px;top:489px;width:84px;height:19px;background:#fff;border:1px solid #767676;box-shadow:2px 2px 2px rgba(0,0,0,.25)"></div>
<div class="t" style="left:1787px;top:492px;color:#555">QVBoxLayout</div>
<div class="a" style="left:1359px;top:535px;width:561px;height:2px;background:#111"></div>
<div class="a" style="left:1359px;top:537px;width:561px;height:21px;background:linear-gradient(90deg,rgba(0,0,0,.118) 0%,rgba(153,153,153,.39) 70%,rgba(0,0,0,.157) 100%),linear-gradient(#8e8e8e 0px,#767676 8px,#666 8px,#474747 21px);background-size:1920px 21px,100% 100%;background-position:-1359px 0,0 0"></div>
<div class="a" style="left:1360px;top:537px;width:489px;height:21px;background:linear-gradient(#d8d8d8,#fff 5px);border:1px solid #222;border-bottom:2px solid #111;border-radius:3px"></div>
<div class="t" style="left:1362px;top:541px;color:#8e8e8e">Фильтр</div>
<svg class="a" style="left:1853px;top:539px;" width="17" height="17" viewBox="0 0 17 17"><path d="M7.5 2 V15 M1 8.5 H14" stroke="#cfcfcf" stroke-width="3"/><path d="M12 13 H16 L14 15.5Z" fill="#bbb"/></svg>
<svg class="a" style="left:1876px;top:539px;" width="16" height="17" viewBox="0 0 16 17"><path d="M1.5 8.5 H14.5" stroke="#cfcfcf" stroke-width="3"/></svg>
<svg class="a" style="left:1897px;top:538px;" width="20" height="19" viewBox="0 0 20 19"><path d="M3 17 L13 7" stroke="#c8c8c8" stroke-width="2.4"/><path d="M12 3 A4 4 0 0 0 17 9 L18 6 L15 5 L16 2Z" fill="#c8c8c8"/><path d="M15 14 L19 14 L17 16.5Z" fill="#eee"/></svg>
<div class="a" style="left:1359px;top:558px;width:561px;height:18px;background:#f0f0f0;border-bottom:1px solid #d8d8d8"></div>
<div class="t" style="left:1362px;top:562px;font-size:12px;transform:scaleX(0.8874);transform-origin:0 0;">verticalLayout_AMM : QVBoxLayout</div>
<div class="t" style="left:1363px;top:582px;">Свойство</div>
<div class="t" style="left:1573px;top:582px;">Значение</div>
<div class="a" style="left:1568px;top:578px;width:1px;height:22px;background:#e5e5e5"></div>
<div class="a" style="left:1359px;top:600px;width:561px;height:19px;background:#a4a4a4"></div>
<svg class="a" style="left:1363px;top:606px;" width="10" height="7" viewBox="0 0 10 7"><path d="M1 1 L5 5 L9 1" stroke="#333" stroke-width="1.4" fill="none"/></svg>
<div class="t" style="left:1382px;top:603px;color:#fff;font-weight:bold">Layout</div>
<div class="a" style="left:1359px;top:619px;width:561px;height:19px;background:#ffdfdf"></div>
<div class="a" style="left:1359px;top:619px;width:20px;height:19px;background:#ffbfbf"></div>
<div class="a" style="left:1359px;top:637px;width:561px;height:1px;background:#dcd0d0"></div>
<div class="a" style="left:1568px;top:619px;width:1px;height:19px;background:#dcd0d0"></div>
<div class="t" style="left:1382px;top:622px;font-weight:bold">layoutName</div>
<div class="t" style="left:1572px;top:622px;">verticalLayout_AMM</div>
<div class="a" style="left:1359px;top:638px;width:561px;height:19px;background:#ffbfbf"></div>
<div class="a" style="left:1359px;top:656px;width:561px;height:1px;background:#dcd0d0"></div>
<div class="a" style="left:1568px;top:638px;width:1px;height:19px;background:#dcd0d0"></div>
<div class="t" style="left:1382px;top:641px;">layoutLeftMargin</div>
<div class="t" style="left:1572px;top:641px;">0</div>
<div class="a" style="left:1359px;top:657px;width:561px;height:19px;background:#ffdfdf"></div>
<div class="a" style="left:1359px;top:657px;width:20px;height:19px;background:#ffbfbf"></div>
<div class="a" style="left:1359px;top:675px;width:561px;height:1px;background:#dcd0d0"></div>
<div class="a" style="left:1568px;top:657px;width:1px;height:19px;background:#dcd0d0"></div>
<div class="t" style="left:1382px;top:660px;">layoutTopMargin</div>
<div class="t" style="left:1572px;top:660px;">0</div>
<div class="a" style="left:1359px;top:676px;width:561px;height:19px;background:#ffbfbf"></div>
<div class="a" style="left:1359px;top:694px;width:561px;height:1px;background:#dcd0d0"></div>
<div class="a" style="left:1568px;top:676px;width:1px;height:19px;background:#dcd0d0"></div>
<div class="t" style="left:1382px;top:679px;">layoutRightMargin</div>
<div class="t" style="left:1572px;top:679px;">0</div>
<div class="a" style="left:1359px;top:695px;width:561px;height:19px;background:#ffdfdf"></div>
<div class="a" style="left:1359px;top:695px;width:20px;height:19px;background:#ffbfbf"></div>
<div class="a" style="left:1359px;top:713px;width:561px;height:1px;background:#dcd0d0"></div>
<div class="a" style="left:1568px;top:695px;width:1px;height:19px;background:#dcd0d0"></div>
<div class="t" style="left:1382px;top:698px;">layoutBottomMargin</div>
<div class="t" style="left:1572px;top:698px;">0</div>
<div class="a" style="left:1359px;top:714px;width:561px;height:19px;background:#ffbfbf"></div>
<div class="a" style="left:1359px;top:732px;width:561px;height:1px;background:#dcd0d0"></div>
<div class="a" style="left:1568px;top:714px;width:1px;height:19px;background:#dcd0d0"></div>
<div class="t" style="left:1382px;top:717px;">layoutSpacing</div>
<div class="t" style="left:1572px;top:717px;">6</div>
<div class="a" style="left:1359px;top:733px;width:561px;height:19px;background:#ffdfdf"></div>
<div class="a" style="left:1359px;top:733px;width:20px;height:19px;background:#ffbfbf"></div>
<div class="a" style="left:1359px;top:751px;width:561px;height:1px;background:#dcd0d0"></div>
<div class="a" style="left:1568px;top:733px;width:1px;height:19px;background:#dcd0d0"></div>
<div class="t" style="left:1382px;top:736px;">layoutStretch</div>
<div class="t" style="left:1572px;top:736px;">0,0</div>
<div class="a" style="left:1359px;top:752px;width:561px;height:19px;background:#ffbfbf"></div>
<div class="a" style="left:1359px;top:770px;width:561px;height:1px;background:#dcd0d0"></div>
<div class="a" style="left:1568px;top:752px;width:1px;height:19px;background:#dcd0d0"></div>
<div class="t" style="left:1382px;top:755px;">layoutSizeConstraint</div>
<div class="t" style="left:1572px;top:755px;">SetDefaultConstraint</div>
<div class="a" style="left:254px;top:876px;width:1104px;height:25px;background:linear-gradient(90deg,rgba(0,0,0,.118) 0%,rgba(153,153,153,.39) 70%,rgba(0,0,0,.157) 100%),linear-gradient(#9a9a9a 0px,#8e8e8e 1px,#767676 10px,#666 10px,#474747 24px,#474747 25px)"></div>
<svg class="a" style="left:262px;top:879px;" width="21" height="20" viewBox="0 0 21 20"><path d="M2 2 L10 1 L13 4 L13 17 L3 18Z" fill="#f8f0a0" stroke="#c8b040"/></svg>
<svg class="a" style="left:289px;top:879px;" width="21" height="20" viewBox="0 0 21 20"><path d="M1 3 L9 2 L12 5 V17 L2 18Z" fill="#ddd" stroke="#bbb"/><path d="M7 1 L15 0 L18 3 V15 L9 16" fill="#eee" stroke="#bbb"/></svg>
<svg class="a" style="left:318px;top:879px;" width="21" height="20" viewBox="0 0 21 20"><path d="M2 1 L12 1 V17 L2 17Z" fill="#d8b820" stroke="#907010"/><path d="M8 3 L16 2 V18 L8 18Z" fill="#f0e0a0" stroke="#a09040"/><path d="M3 10 C6 7 9 8 11 9 L9 12 Z" fill="#2a7ad0"/></svg>
<svg class="a" style="left:346px;top:879px;" width="21" height="20" viewBox="0 0 21 20"><path d="M2 1 H11 L15 5 V18 H2Z" fill="#eee" stroke="#ccc"/><path d="M5 8 L12 15 M12 8 L5 15" stroke="#aaa" stroke-width="1.5"/></svg>
<svg class="a" style="left:372px;top:879px;" width="21" height="20" viewBox="0 0 21 20"><path d="M3 18 L12.5 8.5" stroke="#777" stroke-width="3.6" stroke-linecap="round"/><path d="M3 18 L12.5 8.5" stroke="#e8e8e8" stroke-width="1.8" stroke-linecap="round"/><path d="M17 2 A4.6 4.6 0 1 0 19.5 7" stroke="#777" stroke-width="3.6" fill="none"/><path d="M17 2 A4.6 4.6 0 1 0 19.5 7" stroke="#e8e8e8" stroke-width="1.8" fill="none"/><path d="M16 14 H21 L18.5 17Z" fill="#eee"/></svg>
<div class="a" style="left:880px;top:877px;width:478px;height:23px;background:#fff;border:1px solid #111;border-bottom:2px solid #111;border-radius:3px"></div>
<div class="t" style="left:882px;top:883px;color:#8e8e8e">Фильтр</div>
<div class="a" style="left:254px;top:901px;width:1104px;height:112px;background:#fff"></div>
<div class="t" style="left:258px;top:906px;">Имя</div>
<div class="t" style="left:358px;top:906px;">Используется</div>
<div class="t" style="left:458px;top:906px;">Текст</div>
<div class="t" style="left:558px;top:906px;">Горячая клавиш</div>
<div class="t" style="left:658px;top:906px;">Триггерное</div>
<div class="t" style="left:758px;top:906px;">Подсказка</div>
<div class="a" style="left:353px;top:903px;width:1px;height:21px;background:#e5e5e5"></div>
<div class="a" style="left:453px;top:903px;width:1px;height:21px;background:#e5e5e5"></div>
<div class="a" style="left:553px;top:903px;width:1px;height:21px;background:#e5e5e5"></div>
<div class="a" style="left:653px;top:903px;width:1px;height:21px;background:#e5e5e5"></div>
<div class="a" style="left:753px;top:903px;width:1px;height:21px;background:#e5e5e5"></div>
<div class="a" style="left:554px;top:906px;width:98px;height:14px;background:#fff"></div>
<div class="t" style="left:558px;top:906px;">Горячая клавиш</div>
<div class="t" style="left:648px;top:906px;color:#999">.</div>
<div class="a" style="left:379px;top:993px;width:979px;height:20px;background:#f0f0f0;border-top:1px solid #b8b8b8;border-left:1px solid #b8b8b8"></div>
<div class="a" style="left:380px;top:1011px;width:165px;height:1px;background:#d8d8d8"></div>
<div class="t" style="left:265px;top:997px;font-size:12px;transform:scaleX(0.9379);transform-origin:0 0;">Редактор действий</div>
<div class="t" style="left:389px;top:996px;font-size:12px;transform:scaleX(0.9245);transform-origin:0 0;">Редактор сигналов и слотов</div>
<div class="a" style="left:70px;top:1013px;width:1850px;height:27px;background:linear-gradient(90deg,#2c2c2c 0px,#4a4a4a 1300px,#4a4a4a 100%)"></div>
<div class="a" style="left:70px;top:1013px;width:1850px;height:2px;background:#222"></div>
<div class="a" style="left:70px;top:1015px;width:1850px;height:1px;background:#777"></div>
<svg class="a" style="left:78px;top:1020px;" width="12" height="14" viewBox="0 0 12 14"><rect x="0.5" y="0.5" width="11" height="13" fill="none" stroke="#777"/><rect x="1" y="1" width="4" height="12" fill="#777"/></svg>
<div class="a" style="left:103px;top:1017px;width:199px;height:20px;background:#fff;border-radius:3px;border:1px solid #222"></div>
<svg class="a" style="left:108px;top:1020px;" width="18" height="16" viewBox="0 0 18 16"><circle cx="10" cy="6" r="4.5" fill="none" stroke="#888" stroke-width="1.3"/><path d="M7 9 L2 14" stroke="#888" stroke-width="1.6"/><path d="M12 13 H16 L14 15Z" fill="#888"/></svg>
<div class="t" style="left:129px;top:1021px;color:#777">Быстрый поиск (Ctrl+K)</div>
<div class="a" style="left:306px;top:1017px;width:1px;height:21px;background:#2a2a2a"></div>
<div class="a" style="left:307px;top:1017px;width:1px;height:21px;background:#666"></div>
<div class="a" style="left:313px;top:1018px;width:17px;height:19px;background:linear-gradient(#6a6a6a,#555);border:1px solid #777;border-radius:3px 0 0 3px"></div>
<div class="t" style="left:317px;top:1021px;color:#e8e8e8">1</div>
<div class="a" style="left:330px;top:1018px;width:58px;height:19px;background:linear-gradient(#e0e0e0,#c8c8c8);border:1px solid #888;border-radius:0 3px 3px 0"></div>
<div class="t" style="left:333px;top:1021px;font-size:12px;transform:scaleX(0.8835);transform-origin:0 0;">Проблемы</div>
<div class="a" style="left:394px;top:1018px;width:17px;height:19px;background:linear-gradient(#6a6a6a,#555);border:1px solid #777;border-radius:3px 0 0 3px"></div>
<div class="t" style="left:398px;top:1021px;color:#e8e8e8">2</div>
<div class="a" style="left:411px;top:1018px;width:106px;height:19px;background:linear-gradient(#e0e0e0,#c8c8c8);border:1px solid #888;border-radius:0 3px 3px 0"></div>
<div class="t" style="left:414px;top:1021px;font-size:12px;transform:scaleX(0.9564);transform-origin:0 0;">Результаты поиска</div>
<div class="a" style="left:523px;top:1018px;width:17px;height:19px;background:linear-gradient(#6a6a6a,#555);border:1px solid #777;border-radius:3px 0 0 3px"></div>
<div class="t" style="left:527px;top:1021px;color:#e8e8e8">3</div>
<div class="a" style="left:540px;top:1018px;width:105px;height:19px;background:linear-gradient(#e0e0e0,#c8c8c8);border:1px solid #888;border-radius:0 3px 3px 0"></div>
<div class="t" style="left:543px;top:1021px;font-size:12px;transform:scaleX(0.9102);transform-origin:0 0;">Вывод приложения</div>
<div class="a" style="left:651px;top:1018px;width:17px;height:19px;background:linear-gradient(#6a6a6a,#555);border:1px solid #777;border-radius:3px 0 0 3px"></div>
<div class="t" style="left:655px;top:1021px;color:#e8e8e8">4</div>
<div class="a" style="left:668px;top:1018px;width:77px;height:19px;background:linear-gradient(#e0e0e0,#c8c8c8);border:1px solid #888;border-radius:0 3px 3px 0"></div>
<div class="t" style="left:671px;top:1021px;font-size:12px;transform:scaleX(0.9259);transform-origin:0 0;">Вывод сборки</div>
<div class="a" style="left:752px;top:1018px;width:17px;height:19px;background:linear-gradient(#6a6a6a,#555);border:1px solid #777;border-radius:3px 0 0 3px"></div>
<div class="t" style="left:756px;top:1021px;color:#e8e8e8">5</div>
<div class="a" style="left:769px;top:1018px;width:131px;height:19px;background:linear-gradient(#e0e0e0,#c8c8c8);border:1px solid #888;border-radius:0 3px 3px 0"></div>
<div class="t" style="left:772px;top:1021px;font-size:12px;transform:scaleX(0.8958);transform-origin:0 0;">Консоль отладчика QML</div>
<div class="a" style="left:906px;top:1018px;width:17px;height:19px;background:linear-gradient(#6a6a6a,#555);border:1px solid #777;border-radius:3px 0 0 3px"></div>
<div class="t" style="left:910px;top:1021px;color:#e8e8e8">6</div>
<div class="a" style="left:923px;top:1018px;width:116px;height:19px;background:linear-gradient(#e0e0e0,#c8c8c8);border:1px solid #888;border-radius:0 3px 3px 0"></div>
<div class="t" style="left:926px;top:1021px;font-size:12px;transform:scaleX(0.8873);transform-origin:0 0;">Основные сообщения</div>
<div class="a" style="left:1045px;top:1018px;width:17px;height:19px;background:linear-gradient(#6a6a6a,#555);border:1px solid #777;border-radius:3px 0 0 3px"></div>
<div class="t" style="left:1049px;top:1021px;color:#e8e8e8">7</div>
<div class="a" style="left:1062px;top:1018px;width:95px;height:19px;background:linear-gradient(#e0e0e0,#c8c8c8);border:1px solid #888;border-radius:0 3px 3px 0"></div>
<div class="t" style="left:1065px;top:1021px;font-size:12px;transform:scaleX(0.9214);transform-origin:0 0;">Контроль версий</div>
<div class="a" style="left:1163px;top:1018px;width:17px;height:19px;background:linear-gradient(#6a6a6a,#555);border:1px solid #777;border-radius:3px 0 0 3px"></div>
<div class="t" style="left:1167px;top:1021px;color:#e8e8e8">8</div>
<div class="a" style="left:1180px;top:1018px;width:141px;height:19px;background:linear-gradient(#e0e0e0,#c8c8c8);border:1px solid #888;border-radius:0 3px 3px 0"></div>
<div class="t" style="left:1183px;top:1021px;font-size:12px;transform:scaleX(0.9383);transform-origin:0 0;">Результаты тестирования</div>
<div class="a" style="left:1328px;top:1018px;width:16px;height:19px;background:linear-gradient(#6a6a6a,#555);border:1px solid #777;border-radius:3px"></div>
<svg class="a" style="left:1331px;top:1021px;" width="10" height="13" viewBox="0 0 10 13"><path d="M1 5 L5 1 L9 5Z M1 8 L5 12 L9 8Z" fill="#ddd"/></svg>
<div class="a" style="left:1868px;top:1017px;width:23px;height:22px;background:#333"></div>
<svg class="a" style="left:1871px;top:1020px;" width="16" height="14" viewBox="0 0 16 14"><path d="M8 1 V4 M6 3 L8 1 L10 3" stroke="#ccc" fill="none"/><rect x="1.5" y="7.5" width="13" height="3" fill="none" stroke="#ccc"/></svg>
<svg class="a" style="left:1900px;top:1021px;" width="13" height="12" viewBox="0 0 13 12"><rect x="0.5" y="0.5" width="12" height="11" fill="none" stroke="#777"/><rect x="7" y="1" width="5" height="10" fill="#777"/></svg>
<div class="a" style="left:0px;top:1040px;width:1920px;height:40px;background:#1b2a30"></div>
<div class="a" style="left:687px;top:1040px;width:48px;height:40px;background:#3d474b"></div>
<div class="a" style="left:250px;top:1078px;width:40px;height:2px;background:#76b9ed"></div>
<div class="a" style="left:299px;top:1078px;width:40px;height:2px;background:#76b9ed"></div>
<div class="a" style="left:445px;top:1078px;width:40px;height:2px;background:#76b9ed"></div>
<div class="a" style="left:687px;top:1078px;width:48px;height:2px;background:#76b9ed"></div>
<div class="a" style="left:789px;top:1078px;width:40px;height:2px;background:#76b9ed"></div>
<div class="a" style="left:838px;top:1078px;width:40px;height:2px;background:#76b9ed"></div>
<div class="a" style="left:936px;top:1078px;width:40px;height:2px;background:#76b9ed"></div>
<div class="a" style="left:985px;top:1078px;width:40px;height:2px;background:#76b9ed"></div>
<div class="a" style="left:1034px;top:1078px;width:40px;height:2px;background:#76b9ed"></div>
<svg class="a" style="left:16px;top:1052px;" width="17" height="17" viewBox="0 0 17 17"><path d="M0 2.3 L6.8 1.4 V8 H0Z M7.8 1.2 L17 0 V8 H7.8Z M0 9 H6.8 V15.6 L0 14.7Z M7.8 9 H17 V17 L7.8 15.8Z" fill="#fff"/></svg>
<svg class="a" style="left:61px;top:1049px;" width="23" height="23" viewBox="0 0 23 23"><circle cx="13.5" cy="9.5" r="7" fill="none" stroke="#fff" stroke-width="2"/><path d="M8.5 14.5 L2 21" stroke="#fff" stroke-width="2.4" stroke-linecap="round"/></svg>
<svg class="a" style="left:112px;top:1052px;" width="21" height="15" viewBox="0 0 21 15"><rect x="0" y="0" width="21" height="15" fill="#5cc6f6"/><circle cx="6.5" cy="6" r="4" fill="#fff"/><path d="M6.5 6 V2 A4 4 0 0 1 10.5 6Z" fill="#f5a623"/><circle cx="6.5" cy="6" r="2.6" fill="#5cc6f6"/><path d="M12 3 H18 M14 6 H18 M14 9 H18" stroke="#fff" stroke-width="1.4"/><rect x="2" y="11.5" width="17" height="1.5" fill="#2a80c0"/><rect x="2" y="11.5" width="6" height="1.5" fill="#f5a623"/></svg>
<svg class="a" style="left:163px;top:1048px;" width="18" height="24" viewBox="0 0 18 24"><rect x="0" y="0" width="18" height="24" rx="1.5" fill="#6c7780"/><rect x="2" y="2" width="14" height="4" fill="#45d4f5"/><rect x="2" y="8" width="4" height="4" fill="#dfe3e6"/><rect x="2" y="13" width="4" height="4" fill="#dfe3e6"/><rect x="2" y="18" width="4" height="4" fill="#dfe3e6"/><rect x="7" y="8" width="4" height="4" fill="#dfe3e6"/><rect x="7" y="13" width="4" height="4" fill="#dfe3e6"/><rect x="7" y="18" width="4" height="4" fill="#dfe3e6"/><rect x="12" y="8" width="4" height="4" fill="#dfe3e6"/><rect x="12" y="13" width="4" height="9" fill="#1a4a9a"/></svg>
<svg class="a" style="left:210px;top:1051px;" width="22" height="18" viewBox="0 0 22 18"><path d="M0 0 H8 L10 2 H22 V18 H0Z" fill="#e6a817"/><rect x="0" y="3" width="22" height="15" fill="#ffd45c"/><path d="M4 18 V10 H18 V18 H14 V14 H8 V18Z" fill="#2f8ee0"/></svg>
<svg class="a" style="left:258px;top:1048px;" width="24" height="24" viewBox="0 0 24 24"><rect x="0" y="0" width="24" height="24" rx="2" fill="#2a4cd0"/><rect x="7" y="0.5" width="10" height="6.5" fill="#ddd"/><rect x="13" y="1.5" width="2.5" height="4.5" fill="#2a4cd0"/><rect x="3" y="10" width="18" height="13" fill="#fff"/><path d="M4 12.5 H20 M4 15.5 H20 M4 18.5 H14" stroke="#f08090" stroke-width="1.2"/><rect x="15" y="17" width="5" height="4" fill="#333"/></svg>
<svg class="a" style="left:307px;top:1048px;" width="24" height="24" viewBox="0 0 24 24"><defs><radialGradient id="ff" cx=".5" cy=".6" r=".6"><stop offset="0" stop-color="#ffbd2e"/><stop offset=".6" stop-color="#ff6a2a"/><stop offset="1" stop-color="#e2267a"/></radialGradient></defs><circle cx="12" cy="13" r="10.5" fill="url(#ff)"/><path d="M12 2 C17 3 20 6 22 10 C21 5 18 1 14 0Z" fill="#ffd53a"/><circle cx="11" cy="12" r="5" fill="#7b3fd9"/><path d="M3 7 C6 4 9 5 11 7 C8 7 6 9 6 12Z" fill="#ff9a2a"/></svg>
<svg class="a" style="left:356px;top:1048px;" width="24" height="24" viewBox="0 0 24 24"><circle cx="12" cy="12" r="12" fill="#db4437"/><path d="M12 12 L22.4 6 A12 12 0 0 1 12 24Z" fill="#ffcd40"/><path d="M12 12 L12 24 A12 12 0 0 1 1.6 6Z" fill="#0f9d58"/><circle cx="12" cy="12" r="5.5" fill="#fff"/><circle cx="12" cy="12" r="4.3" fill="#4285f4"/></svg>
<svg class="a" style="left:405px;top:1048px;" width="24" height="24" viewBox="0 0 24 24"><defs><linearGradient id="eg" x1="0" y1="0" x2="1" y2="1"><stop offset="0" stop-color="#36c5f0"/><stop offset="1" stop-color="#4ad66d"/></linearGradient></defs><circle cx="12" cy="12" r="11.5" fill="url(#eg)"/><path d="M1 13 C2 22 12 26 19 21 C13 22 8 19 9 14 C10 10 15 9 18 12 C17 8 12 6 8 7 C4 8 1 10 1 13Z" fill="#1167b1"/><ellipse cx="14" cy="13.5" rx="4.5" ry="3" fill="#1b2a30"/></svg>
<svg class="a" style="left:454px;top:1048px;" width="24" height="24" viewBox="0 0 24 24"><rect x="0" y="0" width="24" height="24" rx="3" fill="#1e9de8"/><circle cx="12" cy="11.5" r="6.5" fill="none" stroke="#fff" stroke-width="2.6"/><path d="M15 15 L19.5 19.5" stroke="#fff" stroke-width="2.6"/></svg>
<svg class="a" style="left:503px;top:1049px;" width="24" height="22" viewBox="0 0 24 22"><path d="M0 9 L12 0 L24 9 V22 H0Z" fill="#1967d2"/><rect x="6" y="5" width="12" height="10" rx="1.5" fill="#fff"/><text x="12" y="13.5" font-size="9" font-weight="bold" font-family="Liberation Sans" text-anchor="middle" fill="#1967d2">b</text><path d="M0 9 L12 17 L24 9 V22 H0Z" fill="#2a78e4"/></svg>
<svg class="a" style="left:553px;top:1048px;" width="22" height="24" viewBox="0 0 22 24"><path d="M0 0 H14 L18 4 V24 H0Z" fill="#f4f4f4" stroke="#bbb" stroke-width=".8"/><rect x="1" y="9" width="16" height="14" fill="#8cd040"/><path d="M5 8 V17 M7 12 H11" stroke="#222" stroke-width="1.4"/><path d="M11 20 L20 3" stroke="#e8a020" stroke-width="2.4"/><path d="M19.5 1 L21 3" stroke="#e03030" stroke-width="2"/></svg>
<svg class="a" style="left:601px;top:1050px;" width="22" height="19" viewBox="0 0 22 19"><rect x="0.5" y="0.5" width="21" height="18" fill="#000" stroke="#aaa"/><rect x="0.5" y="0.5" width="21" height="2" fill="#ccc"/><path d="M3 6 H6 M7 6 H9 M11 8 H18" stroke="#ddd" stroke-width="1.2"/></svg>
<svg class="a" style="left:650px;top:1051px;" width="24" height="18" viewBox="0 0 24 18"><path d="M5 0.5 H23.5 L19 17.5 H0.5Z" fill="#1f3556" stroke="#c8d4e8" stroke-width=".9"/><path d="M6 4 L12 8.5 L5 13" stroke="#fff" stroke-width="2" fill="none"/><path d="M11 13.5 H16" stroke="#fff" stroke-width="2"/></svg>
<svg class="a" style="left:701px;top:1052px;" width="20" height="16" viewBox="0 0 20 16"><path d="M2.5 0 H20 V12.5 L17 16 H0 V3Z" fill="#2bc23a"/><text x="10" y="12.5" font-size="11" font-family="Liberation Sans" text-anchor="middle" fill="#fff">QC</text></svg>
<svg class="a" style="left:750px;top:1052px;" width="20" height="16" viewBox="0 0 20 16"><path d="M2.5 0 H20 V12.5 L17 16 H0 V3Z" fill="#2bc23a"/><path d="M0 3 L20 12.5 L17 16 H0Z" fill="#22a830"/><text x="10" y="13" font-size="11" font-family="Liberation Sans" text-anchor="middle" fill="#fff">L</text></svg>
<svg class="a" style="left:797px;top:1048px;" width="24" height="24" viewBox="0 0 24 24"><circle cx="12" cy="12" r="11.3" fill="#1497da" stroke="#eee" stroke-width="1.2"/><path d="M8 4 V10 C8 13 16 13 16 10 V4 M10.7 4 V10 M13.3 4 V10 M12 12 V21" stroke="#fff" stroke-width="1.5" fill="none"/></svg>
<svg class="a" style="left:849px;top:1049px;" width="17" height="22" viewBox="0 0 17 22"><path d="M9 0 L16 7 L15 17 L9 22 L2 18 L0 10 L3 4Z" fill="#7c4dd8"/><path d="M9 0 L3 4 L2 12 L7 14Z" fill="#b89af0"/><path d="M7 14 L9 22 L15 17Z" fill="#5a2ab0"/></svg>
<svg class="a" style="left:895px;top:1048px;" width="24" height="24" viewBox="0 0 24 24"><path d="M4 3 C7 0 17 0 20 3 C23 7 22 13 18 15 L17 22 C15 23 13 20 13 15 L11 15 C11 20 9 23 7 22 L6 15 C2 13 1 7 4 3Z" fill="#336791" stroke="#fff" stroke-width="1"/><path d="M9 6 C9 10 10 12 12 13" stroke="#fff" fill="none"/></svg>
<svg class="a" style="left:944px;top:1048px;" width="24" height="24" viewBox="0 0 24 24"><path d="M4 3 C7 0 17 0 20 3 C23 7 22 13 18 15 L17 22 C15 23 13 20 13 15 L11 15 C11 20 9 23 7 22 L6 15 C2 13 1 7 4 3Z" fill="#336791" stroke="#fff" stroke-width="1"/><path d="M9 6 C9 10 10 12 12 13" stroke="#fff" fill="none"/></svg>
<svg class="a" style="left:993px;top:1048px;" width="24" height="24" viewBox="0 0 24 24"><path d="M1 1 L20 3 V16 L1 14Z" fill="#1a3ad0" stroke="#ccc" stroke-width="1.2"/><path d="M3 3 L12 4 L3 12Z" fill="#6a8af0"/><path d="M6 17 H16 L14 20 H8Z" fill="#ccc"/><circle cx="17" cy="18" r="5.5" fill="#e8e8e8" stroke="#aaa"/><path d="M14.5 18 H19.5 M16 16 L14 18 L16 20 M18 16 L20 18 L18 20" stroke="#2a9a2a" stroke-width="1.2" fill="none"/></svg>
<svg class="a" style="left:1043px;top:1052px;" width="21" height="15" viewBox="0 0 21 15"><rect x="0" y="0" width="21" height="15" fill="#e8e8e8"/><rect x="6" y="2" width="9" height="11" fill="#1a7ae0"/><path d="M2 4 H4 M2 7 H4 M2 10 H4 M16 3 H19 M16 6 H19 M16 9 H19" stroke="#888"/></svg>
<svg class="a" style="left:1577px;top:1052px;" width="17" height="17" viewBox="0 0 17 17"><path d="M0 6 L8 1 L16 6 V14 H0Z" fill="#2a60d0"/><rect x="4" y="4" width="8" height="6" fill="#fff"/></svg>
<svg class="a" style="left:1601px;top:1052px;" width="17" height="17" viewBox="0 0 17 17"><ellipse cx="8" cy="8" rx="6" ry="8" fill="#1a8ae8"/><path d="M5 5 L11 11 L8 14 V2 L11 5 L5 11" stroke="#fff" fill="none"/></svg>
<svg class="a" style="left:1625px;top:1052px;" width="17" height="17" viewBox="0 0 17 17"><circle cx="8" cy="8" r="8" fill="#1a3a5a"/><circle cx="11" cy="6" r="3" fill="none" stroke="#ddd" stroke-width="1.4"/><circle cx="5" cy="11" r="2" fill="#ddd"/></svg>
<svg class="a" style="left:1649px;top:1052px;" width="17" height="17" viewBox="0 0 17 17"><rect x="0" y="0" width="16" height="16" rx="2" fill="#1ea0f0"/><circle cx="8" cy="7.5" r="4.5" fill="none" stroke="#fff" stroke-width="2"/></svg>
<svg class="a" style="left:1673px;top:1052px;" width="17" height="17" viewBox="0 0 17 17"><rect x="0" y="0" width="16" height="16" fill="#111"/><ellipse cx="9" cy="8" rx="5" ry="3.5" fill="none" stroke="#76b900" stroke-width="1.5"/></svg>
<svg class="a" style="left:1697px;top:1052px;" width="17" height="17" viewBox="0 0 17 17"><path d="M8 0 L15 3 V8 C15 12 11 15 8 16 C5 15 1 12 1 8 V3Z" fill="#fff"/><path d="M8 0 V16 M1 8 H15" stroke="#111" stroke-width="1.3"/><circle cx="12" cy="13" r="3.5" fill="#1a9a40"/></svg>
<svg class="a" style="left:1721px;top:1052px;" width="17" height="17" viewBox="0 0 17 17"><rect x="1.5" y="3.5" width="14" height="9" fill="none" stroke="#fff"/><rect x="0.5" y="1.5" width="4" height="4" fill="#1c2a2f" stroke="#fff"/><path d="M8 13 V15 M5 15.5 H11" stroke="#fff"/></svg>
<svg class="a" style="left:1745px;top:1052px;" width="17" height="17" viewBox="0 0 17 17"><path d="M1 6 H4 L8 2 V14 L4 10 H1Z" fill="none" stroke="#fff"/><path d="M10 5 C12 7 12 9 10 11 M12 3 C15 6 15 10 12 13" stroke="#fff" fill="none"/></svg>
<div class="t" style="left:1771px;top:1053px;font-size:12px;transform:scaleX(0.8846);transform-origin:0 0;color:#fff">ENG</div>
<div class="t" style="left:1820px;top:1043px;font-size:12px;transform:scaleX(0.8995);transform-origin:0 0;color:#fff">17:29</div>
<div class="t" style="left:1807px;top:1062px;font-size:12px;transform:scaleX(0.9131);transform-origin:0 0;color:#fff">07.11.2025</div>
<svg class="a" style="left:1879px;top:1051px;" width="28" height="26" viewBox="0 0 28 26"><path d="M1 1 H17 V12 H8 L5 15 V12 H1Z" fill="#fff"/><path d="M4 4 H14 M4 7 H14" stroke="#1c2a2f"/><circle cx="17" cy="17" r="7.5" fill="#2a3a3f" stroke="#aaa"/><text x="17" y="21" font-size="10" font-family="Liberation Sans" text-anchor="middle" fill="#fff">14</text></svg>
<div class="a" style="left:1915px;top:1040px;width:1px;height:40px;background:#555"></div>
</body></html>
